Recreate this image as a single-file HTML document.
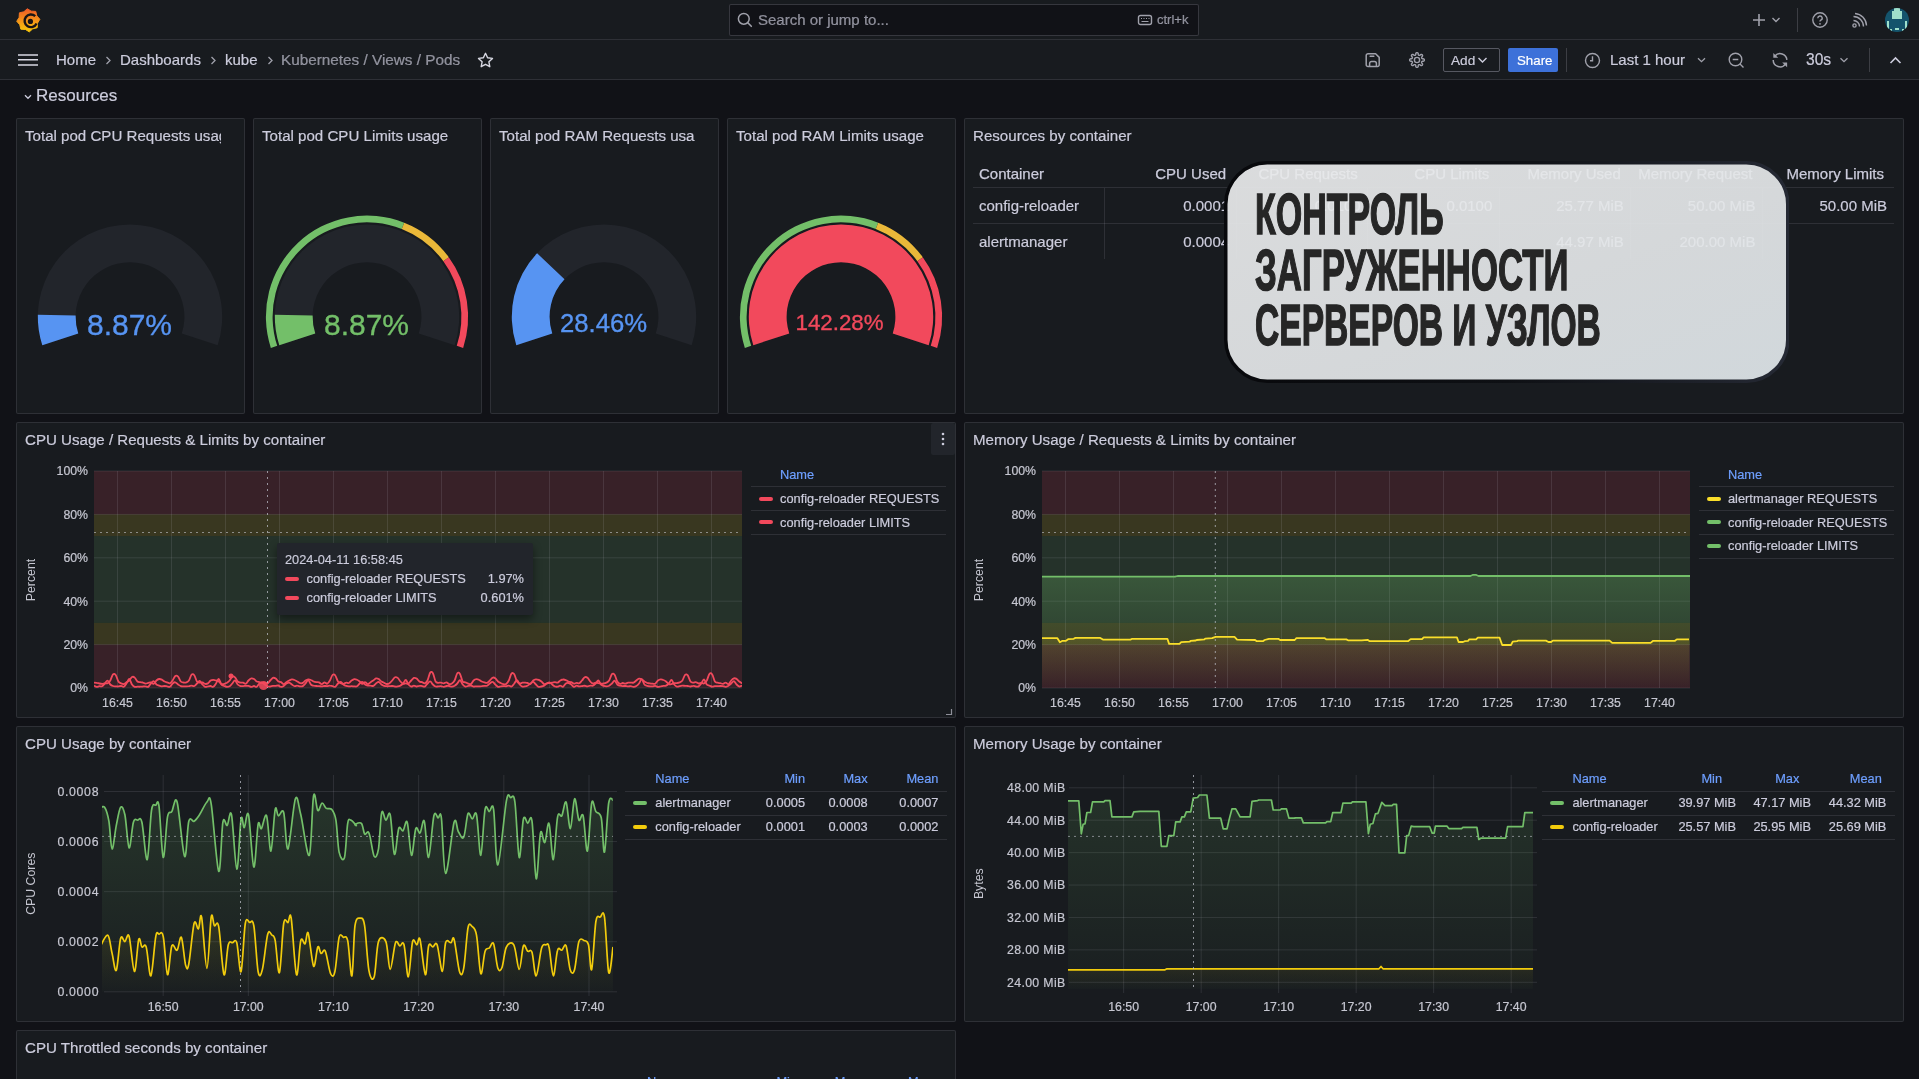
<!DOCTYPE html>
<html><head><meta charset="utf-8">
<style>
*{box-sizing:border-box;margin:0;padding:0}
html,body{width:1919px;height:1079px;overflow:hidden;background:#111217;will-change:transform;font-family:"Liberation Sans",sans-serif;color:#ccccdc}
.abs{position:absolute}
#top{position:absolute;left:0;top:0;width:1919px;height:40px;background:#181b1f;border-bottom:1px solid rgba(204,204,220,0.12)}
#nav{position:absolute;left:0;top:40px;width:1919px;height:40px;background:#181b1f;border-bottom:1px solid rgba(204,204,220,0.12)}
.panel{position:absolute;background:#181b1f;border:1px solid rgba(204,204,220,0.12);border-radius:2px;overflow:hidden}
.ptitle{position:absolute;left:8px;top:8px;font-size:15.1px;line-height:18px;-webkit-text-stroke-width:0.2px;color:#ccccdc;white-space:nowrap}
.t{position:absolute;white-space:nowrap;-webkit-text-stroke-width:0.2px}
</style></head><body>
<div id="top">
<svg class="abs" style="left:12px;top:4px" width="32" height="32" viewBox="0 0 32 32">
<defs><linearGradient id="lg" x1="0" y1="0" x2="0" y2="1"><stop offset="0" stop-color="#f05a28"/><stop offset="1" stop-color="#fbca0a"/></linearGradient></defs>
<path fill="url(#lg)" stroke="url(#lg)" stroke-width="1" stroke-linejoin="round" d="M15.29 4.74 L19.19 7.14 L23.76 7.41 L24.82 11.87 L27.86 15.29 L25.46 19.19 L25.19 23.76 L20.73 24.82 L17.31 27.86 L13.41 25.46 L8.84 25.19 L7.78 20.73 L4.74 17.31 L7.14 13.41 L7.41 8.84 L11.87 7.78Z"/>
<path fill="none" stroke="#1a1416" stroke-width="2.4" d="M23.2 12.2 A6.3 6.3 0 1 0 24.6 19.5"/>
<circle cx="18.4" cy="17.4" r="2.6" fill="#1a1416"/>
</svg>
<div class="abs" style="left:729px;top:4px;width:470px;height:32px;background:#111217;border:1px solid rgba(204,204,220,0.2);border-radius:2px"></div>
<svg class="abs" style="left:737px;top:12px" width="16" height="16" viewBox="0 0 16 16"><circle cx="6.8" cy="6.8" r="5.4" fill="none" stroke="#a0a1ab" stroke-width="1.5"/><path d="M10.8 10.8 L14.3 14.3" stroke="#a0a1ab" stroke-width="1.6" stroke-linecap="round"/></svg>
<div class="t" style="left:758px;top:11px;font-size:15px;line-height:18px;color:rgba(204,204,220,0.65)">Search or jump to...</div>
<svg class="abs" style="left:1137px;top:14px" width="16" height="12" viewBox="0 0 16 12"><rect x="1.5" y="1.5" width="13" height="9" rx="2" fill="none" stroke="#a0a1ab" stroke-width="1.4"/><path d="M4 4.5h1M6.5 4.5h1M9 4.5h1M11.5 4.5h1M4.5 7.5h7" stroke="#a0a1ab" stroke-width="1.2"/></svg>
<div class="t" style="left:1157px;top:12px;font-size:13px;line-height:15px;color:rgba(204,204,220,0.65)">ctrl+k</div>
<svg class="abs" style="left:1751px;top:12px" width="16" height="16" viewBox="0 0 16 16"><path d="M8 2v12M2 8h12" stroke="#a0a1ab" stroke-width="1.6"/></svg>
<svg class="abs" style="left:1771px;top:16px" width="10" height="8" viewBox="0 0 10 8"><path d="M1.5 2l3.5 3.5L8.5 2" fill="none" stroke="#a0a1ab" stroke-width="1.4"/></svg>
<div class="abs" style="left:1797px;top:8px;width:1px;height:24px;background:rgba(204,204,220,0.2)"></div>
<svg class="abs" style="left:1811px;top:11px" width="18" height="18" viewBox="0 0 18 18"><circle cx="9" cy="9" r="7.2" fill="none" stroke="#a0a1ab" stroke-width="1.4"/><path d="M6.8 7.2a2.2 2.2 0 1 1 3 2c-.6.3-.8.6-.8 1.3" fill="none" stroke="#a0a1ab" stroke-width="1.4"/><circle cx="9" cy="12.8" r="0.9" fill="#a0a1ab"/></svg>
<svg class="abs" style="left:1851px;top:12px" width="17" height="17" viewBox="0 0 17 17"><circle cx="3.5" cy="13.5" r="1.6" fill="none" stroke="#a0a1ab" stroke-width="1.4"/><path d="M2.5 8.5a6 6 0 0 1 6 6M2.5 4.5a10 10 0 0 1 10 10M4 1.5a12.5 12.5 0 0 1 11.5 12" fill="none" stroke="#a0a1ab" stroke-width="1.4"/></svg>
<svg class="abs" style="left:1885px;top:8px" width="24" height="24" viewBox="0 0 24 24"><defs><clipPath id="av"><circle cx="12" cy="12" r="12"/></clipPath></defs><g clip-path="url(#av)"><rect width="24" height="24" fill="#14546c"/><rect x="9" y="0" width="6" height="3" fill="#9fe0cb"/><rect x="7" y="3" width="10" height="8" fill="#9fe0cb"/><rect x="2" y="13" width="2" height="9" fill="#9fe0cb"/><rect x="20" y="13" width="2" height="9" fill="#9fe0cb"/><rect x="10" y="20" width="4" height="2" fill="#9fe0cb"/><rect x="5" y="21" width="2" height="3" fill="#9fe0cb"/><rect x="17" y="21" width="2" height="3" fill="#9fe0cb"/></g></svg>
</div>
<div id="nav">
<svg class="abs" style="left:17px;top:13px" width="22" height="14" viewBox="0 0 22 14"><path d="M1 2h20M1 6.8h20M1 12h20" stroke="#d8d9e3" stroke-width="1.6"/></svg>
<div class="t" style="left:56px;top:11px;font-size:15px;line-height:18px;color:#ccccdc">Home</div>
<svg class="abs" style="left:104px;top:16px" width="8" height="9" viewBox="0 0 8 9"><path d="M2.5 1l3.5 3.5L2.5 8" fill="none" stroke="#a0a1ab" stroke-width="1.3"/></svg>
<div class="t" style="left:120px;top:11px;font-size:15px;line-height:18px;color:#ccccdc">Dashboards</div>
<svg class="abs" style="left:209px;top:16px" width="8" height="9" viewBox="0 0 8 9"><path d="M2.5 1l3.5 3.5L2.5 8" fill="none" stroke="#a0a1ab" stroke-width="1.3"/></svg>
<div class="t" style="left:225px;top:11px;font-size:15px;line-height:18px;color:#ccccdc">kube</div>
<svg class="abs" style="left:266px;top:16px" width="8" height="9" viewBox="0 0 8 9"><path d="M2.5 1l3.5 3.5L2.5 8" fill="none" stroke="#a0a1ab" stroke-width="1.3"/></svg>
<div class="t" style="left:281px;top:11px;font-size:15.3px;line-height:18px;color:rgba(204,204,220,0.65)">Kubernetes / Views / Pods</div>
<svg class="abs" style="left:477px;top:12px" width="17" height="16" viewBox="0 0 17 16"><path d="M8.5 1.3l2.1 4.5 4.9.6-3.6 3.4.9 4.9-4.3-2.4-4.3 2.4.9-4.9L1.5 6.4l4.9-.6z" fill="none" stroke="#d8d9e3" stroke-width="1.4" stroke-linejoin="round"/></svg>

<svg class="abs" style="left:1365px;top:12px" width="16" height="16" viewBox="0 0 16 16"><path d="M3 1.8h7.6l3.6 3.6v7.4a1.8 1.8 0 0 1-1.8 1.8H3a1.8 1.8 0 0 1-1.8-1.8V3.6A1.8 1.8 0 0 1 3 1.8z" fill="none" stroke="#a0a1ab" stroke-width="1.5" stroke-linejoin="round"/><path d="M5.2 4.2h3.6" stroke="#a0a1ab" stroke-width="1.6" stroke-linecap="round"/><path d="M4.6 14.4v-2.9a2 2 0 0 1 2-2h2.8a2 2 0 0 1 2 2v2.9" fill="none" stroke="#a0a1ab" stroke-width="1.5"/></svg>
<svg class="abs" style="left:1408px;top:11px" width="18" height="18" viewBox="0 0 18 18"><path d="M16.35 9.00 L16.33 9.23 L16.27 9.46 L16.17 9.68 L16.01 9.89 L15.79 10.08 L15.42 10.22 L14.52 10.23 L14.25 10.35 L14.05 10.47 L13.90 10.59 L13.79 10.72 L13.70 10.86 L13.64 11.01 L13.60 11.17 L13.59 11.34 L13.61 11.53 L13.66 11.76 L13.78 12.03 L14.40 12.67 L14.56 13.04 L14.59 13.33 L14.55 13.59 L14.46 13.82 L14.35 14.02 L14.20 14.20 L14.02 14.35 L13.82 14.46 L13.59 14.55 L13.33 14.59 L13.04 14.56 L12.67 14.40 L12.03 13.78 L11.76 13.66 L11.53 13.61 L11.34 13.59 L11.17 13.60 L11.01 13.64 L10.86 13.70 L10.72 13.79 L10.59 13.90 L10.47 14.05 L10.35 14.25 L10.23 14.52 L10.22 15.42 L10.08 15.79 L9.89 16.01 L9.68 16.17 L9.46 16.27 L9.23 16.33 L9.00 16.35 L8.77 16.33 L8.54 16.27 L8.32 16.17 L8.11 16.01 L7.92 15.79 L7.78 15.42 L7.77 14.52 L7.65 14.25 L7.53 14.05 L7.41 13.90 L7.28 13.79 L7.14 13.70 L6.99 13.64 L6.83 13.60 L6.66 13.59 L6.47 13.61 L6.24 13.66 L5.97 13.78 L5.33 14.40 L4.96 14.56 L4.67 14.59 L4.41 14.55 L4.18 14.46 L3.98 14.35 L3.80 14.20 L3.65 14.02 L3.54 13.82 L3.45 13.59 L3.41 13.33 L3.44 13.04 L3.60 12.67 L4.22 12.03 L4.34 11.76 L4.39 11.53 L4.41 11.34 L4.40 11.17 L4.36 11.01 L4.30 10.86 L4.21 10.72 L4.10 10.59 L3.95 10.47 L3.75 10.35 L3.48 10.23 L2.58 10.22 L2.21 10.08 L1.99 9.89 L1.83 9.68 L1.73 9.46 L1.67 9.23 L1.65 9.00 L1.67 8.77 L1.73 8.54 L1.83 8.32 L1.99 8.11 L2.21 7.92 L2.58 7.78 L3.48 7.77 L3.75 7.65 L3.95 7.53 L4.10 7.41 L4.21 7.28 L4.30 7.14 L4.36 6.99 L4.40 6.83 L4.41 6.66 L4.39 6.47 L4.34 6.24 L4.22 5.97 L3.60 5.33 L3.44 4.96 L3.41 4.67 L3.45 4.41 L3.54 4.18 L3.65 3.98 L3.80 3.80 L3.98 3.65 L4.18 3.54 L4.41 3.45 L4.67 3.41 L4.96 3.44 L5.33 3.60 L5.97 4.22 L6.24 4.34 L6.47 4.39 L6.66 4.41 L6.83 4.40 L6.99 4.36 L7.14 4.30 L7.28 4.21 L7.41 4.10 L7.53 3.95 L7.65 3.75 L7.77 3.48 L7.78 2.58 L7.92 2.21 L8.11 1.99 L8.32 1.83 L8.54 1.73 L8.77 1.67 L9.00 1.65 L9.23 1.67 L9.46 1.73 L9.68 1.83 L9.89 1.99 L10.08 2.21 L10.22 2.58 L10.23 3.48 L10.35 3.75 L10.47 3.95 L10.59 4.10 L10.72 4.21 L10.86 4.30 L11.01 4.36 L11.17 4.40 L11.34 4.41 L11.53 4.39 L11.76 4.34 L12.03 4.22 L12.67 3.60 L13.04 3.44 L13.33 3.41 L13.59 3.45 L13.82 3.54 L14.02 3.65 L14.20 3.80 L14.35 3.98 L14.46 4.18 L14.55 4.41 L14.59 4.67 L14.56 4.96 L14.40 5.33 L13.78 5.97 L13.66 6.24 L13.61 6.47 L13.59 6.66 L13.60 6.83 L13.64 6.99 L13.70 7.14 L13.79 7.28 L13.90 7.41 L14.05 7.53 L14.25 7.65 L14.52 7.77 L15.42 7.78 L15.79 7.92 L16.01 8.11 L16.17 8.32 L16.27 8.54 L16.33 8.77Z" fill="none" stroke="#a0a1ab" stroke-width="1.4" stroke-linejoin="round"/><circle cx="9" cy="9" r="2.6" fill="none" stroke="#a0a1ab" stroke-width="1.4"/></svg>
<div class="abs" style="left:1443px;top:8px;width:57px;height:24px;border:1px solid rgba(204,204,220,0.35);border-radius:2px"></div>
<div class="t" style="left:1451px;top:12px;font-size:13.6px;line-height:17px;color:#ccccdc">Add</div>
<svg class="abs" style="left:1477px;top:16px" width="11" height="8" viewBox="0 0 11 8"><path d="M1.5 2l4 4 4-4" fill="none" stroke="#ccccdc" stroke-width="1.4"/></svg>
<div class="abs" style="left:1508px;top:8px;width:50px;height:24px;background:#3d71d9;border-radius:2px"></div>
<div class="t" style="left:1517px;top:12px;font-size:13.3px;line-height:17px;color:#ffffff">Share</div>
<div class="abs" style="left:1566px;top:8px;width:1px;height:24px;background:rgba(204,204,220,0.2)"></div>
<svg class="abs" style="left:1584px;top:12px" width="17" height="17" viewBox="0 0 17 17"><circle cx="8.5" cy="8.5" r="7" fill="none" stroke="#a0a1ab" stroke-width="1.4"/><path d="M8.5 4.3v4.5H6" fill="none" stroke="#a0a1ab" stroke-width="1.4"/></svg>
<div class="t" style="left:1610px;top:11px;font-size:15px;line-height:18px;color:#ccccdc">Last 1 hour</div>
<svg class="abs" style="left:1696px;top:16px" width="11" height="8" viewBox="0 0 11 8"><path d="M2 2.2l3.5 3.5 3.5-3.5" fill="none" stroke="#a0a1ab" stroke-width="1.3"/></svg>
<svg class="abs" style="left:1728px;top:12px" width="18" height="17" viewBox="0 0 18 17"><circle cx="7.5" cy="7.5" r="6.3" fill="none" stroke="#a0a1ab" stroke-width="1.4"/><path d="M4.7 7.5h5.6M12 12l3.5 3.5" fill="none" stroke="#a0a1ab" stroke-width="1.4"/></svg>
<svg class="abs" style="left:1771px;top:12px" width="18" height="17" viewBox="0 0 18 17"><path d="M3.9 4.1A6.8 6.8 0 0 1 15.9 7.9M2.2 8.1A6.8 6.8 0 0 0 14.6 11.9" fill="none" stroke="#a0a1ab" stroke-width="1.5"/><path d="M2.3 0.9V5.8H7.2Z" fill="#a0a1ab"/><path d="M16.1 15.3V10.4H11.2Z" fill="#a0a1ab"/></svg>
<div class="t" style="left:1806px;top:11px;font-size:15.6px;line-height:18px;color:#ccccdc">30s</div>
<svg class="abs" style="left:1839px;top:16px" width="11" height="8" viewBox="0 0 11 8"><path d="M1.5 2.2l3.5 3.5 3.5-3.5" fill="none" stroke="#a0a1ab" stroke-width="1.3"/></svg>
<div class="abs" style="left:1869px;top:8px;width:1px;height:24px;background:rgba(204,204,220,0.2)"></div>
<svg class="abs" style="left:1889px;top:16px" width="13" height="9" viewBox="0 0 13 9"><path d="M1.5 7l5-5 5 5" fill="none" stroke="#ccccdc" stroke-width="1.6"/></svg>
</div>
<svg class="abs" style="left:24px;top:94px" width="8" height="6" viewBox="0 0 8 6"><path d="M1 1.3l3 3 3-3" fill="none" stroke="#ccccdc" stroke-width="1.3"/></svg>
<div class="t" style="left:36px;top:86px;font-size:17px;line-height:20px;color:#ccccdc">Resources</div>


<div class="panel" style="left:16px;top:118px;width:229px;height:296px"><div class="ptitle" style="width:196px;overflow:hidden">Total pod CPU Requests usage</div><svg class="abs" style="left:-1px;top:-1px" width="229" height="296"><path d="M26.31 227.19A92.2 92.2 0 1 1 201.69 227.19L165.74 215.51A54.4 54.4 0 1 0 62.26 215.51Z" fill="#22252b"/><path d="M26.31 227.19A92.2 92.2 0 0 1 21.82 196.83L59.61 197.60A54.4 54.4 0 0 0 62.26 215.51Z" fill="#5794f2"/></svg><div class="t" style="left:-1px;width:227px;top:191px;text-align:center;font-size:30px;line-height:30px;color:#5794f2;-webkit-text-stroke:0.35px #5794f2">8.87%</div></div>
<div class="panel" style="left:253px;top:118px;width:229px;height:296px"><div class="ptitle" style="width:196px;overflow:hidden">Total pod CPU Limits usage</div><svg class="abs" style="left:-1px;top:-1px" width="229" height="296"><path d="M26.31 227.19A92.2 92.2 0 1 1 201.69 227.19L165.74 215.51A54.4 54.4 0 1 0 62.26 215.51Z" fill="#22252b"/><path d="M26.31 227.19A92.2 92.2 0 0 1 21.82 196.83L59.61 197.60A54.4 54.4 0 0 0 62.26 215.51Z" fill="#73bf69"/><path d="M17.85 229.94A101.1 101.1 0 0 1 151.22 104.70L148.75 110.93A94.4 94.4 0 0 0 24.22 227.87Z" fill="#73bf69"/><path d="M151.22 104.70A101.1 101.1 0 0 1 195.79 139.27L190.37 143.21A94.4 94.4 0 0 0 148.75 110.93Z" fill="#eab839"/><path d="M195.79 139.27A101.1 101.1 0 0 1 210.15 229.94L203.78 227.87A94.4 94.4 0 0 0 190.37 143.21Z" fill="#f2495c"/></svg><div class="t" style="left:-1px;width:227px;top:191px;text-align:center;font-size:30px;line-height:30px;color:#73bf69;-webkit-text-stroke:0.35px #73bf69">8.87%</div></div>
<div class="panel" style="left:490px;top:118px;width:229px;height:296px"><div class="ptitle" style="width:196px;overflow:hidden">Total pod RAM Requests usage</div><svg class="abs" style="left:-1px;top:-1px" width="229" height="296"><path d="M26.31 227.19A92.2 92.2 0 1 1 201.69 227.19L165.74 215.51A54.4 54.4 0 1 0 62.26 215.51Z" fill="#22252b"/><path d="M26.31 227.19A92.2 92.2 0 0 1 47.09 135.26L74.52 161.27A54.4 54.4 0 0 0 62.26 215.51Z" fill="#5794f2"/></svg><div class="t" style="left:-1px;width:227px;top:192px;text-align:center;font-size:25.7px;line-height:25.7px;color:#5794f2;-webkit-text-stroke:0.35px #5794f2">28.46%</div></div>
<div class="panel" style="left:727px;top:118px;width:229px;height:296px"><div class="ptitle" style="width:196px;overflow:hidden">Total pod RAM Limits usage</div><svg class="abs" style="left:-1px;top:-1px" width="229" height="296"><path d="M26.31 227.19A92.2 92.2 0 1 1 201.69 227.19L165.74 215.51A54.4 54.4 0 1 0 62.26 215.51Z" fill="#22252b"/><path d="M26.31 227.19A92.2 92.2 0 1 1 201.69 227.19L165.74 215.51A54.4 54.4 0 1 0 62.26 215.51Z" fill="#f2495c"/><path d="M17.85 229.94A101.1 101.1 0 0 1 151.22 104.70L148.75 110.93A94.4 94.4 0 0 0 24.22 227.87Z" fill="#73bf69"/><path d="M151.22 104.70A101.1 101.1 0 0 1 195.79 139.27L190.37 143.21A94.4 94.4 0 0 0 148.75 110.93Z" fill="#eab839"/><path d="M195.79 139.27A101.1 101.1 0 0 1 210.15 229.94L203.78 227.87A94.4 94.4 0 0 0 190.37 143.21Z" fill="#f2495c"/></svg><div class="t" style="left:-2px;width:227px;top:193px;text-align:center;font-size:22.3px;line-height:22.3px;color:#f2495c;-webkit-text-stroke:0.35px #f2495c">142.28%</div></div>
<div class="panel" style="left:964px;top:118px;width:940px;height:296px"><div class="ptitle">Resources by container</div><div class="t" style="left:14.0px;top:46.1px;font-size:15px;line-height:17px;-webkit-text-stroke:0.25px #ccccdc;">Container</div><div class="t" style="right:676.9px;top:46.1px;font-size:15px;line-height:17px;text-align:right;-webkit-text-stroke:0.25px #ccccdc;">CPU Used</div><div class="t" style="right:545.3px;top:46.1px;font-size:15px;line-height:17px;text-align:right;-webkit-text-stroke:0.25px #ccccdc;">CPU Requests</div><div class="t" style="right:413.7px;top:46.1px;font-size:15px;line-height:17px;text-align:right;-webkit-text-stroke:0.25px #ccccdc;">CPU Limits</div><div class="t" style="right:282.2px;top:46.1px;font-size:15px;line-height:17px;text-align:right;-webkit-text-stroke:0.25px #ccccdc;">Memory Used</div><div class="t" style="right:150.6px;top:46.1px;font-size:15px;line-height:17px;text-align:right;-webkit-text-stroke:0.25px #ccccdc;">Memory Request</div><div class="t" style="right:19.0px;top:46.1px;font-size:15px;line-height:17px;text-align:right;-webkit-text-stroke:0.25px #ccccdc;">Memory Limits</div><div class="t" style="left:14.0px;top:77.7px;font-size:15px;line-height:17px;">config-reloader</div><div class="t" style="right:673.9px;top:77.7px;font-size:15px;line-height:17px;text-align:right;">0.0001</div><div class="t" style="right:542.3px;top:77.7px;font-size:15px;line-height:17px;text-align:right;">0.0100</div><div class="t" style="right:410.7px;top:77.7px;font-size:15px;line-height:17px;text-align:right;">0.0100</div><div class="t" style="right:279.2px;top:77.7px;font-size:15px;line-height:17px;text-align:right;">25.77 MiB</div><div class="t" style="right:147.6px;top:77.7px;font-size:15px;line-height:17px;text-align:right;">50.00 MiB</div><div class="t" style="right:16.0px;top:77.7px;font-size:15px;line-height:17px;text-align:right;">50.00 MiB</div><div class="t" style="left:14.0px;top:113.7px;font-size:15px;line-height:17px;">alertmanager</div><div class="t" style="right:673.9px;top:113.7px;font-size:15px;line-height:17px;text-align:right;">0.0004</div><div class="t" style="right:279.2px;top:113.7px;font-size:15px;line-height:17px;text-align:right;">44.97 MiB</div><div class="t" style="right:147.6px;top:113.7px;font-size:15px;line-height:17px;text-align:right;">200.00 MiB</div><div class="abs" style="left:8px;top:68px;width:921px;height:1px;background:rgba(204,204,220,0.12)"></div><div class="abs" style="left:8px;top:104px;width:921px;height:1px;background:rgba(204,204,220,0.12)"></div><div class="abs" style="left:139px;top:69px;width:1px;height:71px;background:rgba(204,204,220,0.12)"></div><div class="abs" style="left:271px;top:69px;width:1px;height:71px;background:rgba(204,204,220,0.12)"></div><div class="abs" style="left:402px;top:69px;width:1px;height:71px;background:rgba(204,204,220,0.12)"></div><div class="abs" style="left:534px;top:69px;width:1px;height:71px;background:rgba(204,204,220,0.12)"></div><div class="abs" style="left:665px;top:69px;width:1px;height:71px;background:rgba(204,204,220,0.12)"></div><div class="abs" style="left:797px;top:69px;width:1px;height:71px;background:rgba(204,204,220,0.12)"></div><svg class="abs" style="left:258.5px;top:42px" width="565.5" height="222"><defs>
<linearGradient id="ob" x1="0" y1="0" x2="1" y2="0"><stop offset="0" stop-color="#08090c"/><stop offset="0.5" stop-color="#0e1014"/><stop offset="1" stop-color="#252934"/></linearGradient>
<linearGradient id="of" x1="0" y1="0" x2="1" y2="1"><stop offset="0" stop-color="#e9eaeb"/><stop offset="0.6" stop-color="#e3e6e8"/><stop offset="1" stop-color="#dfe6ea"/></linearGradient></defs>
<rect x="1.75" y="1.75" width="562.0" height="218.5" rx="41.5" fill="url(#of)" fill-opacity="0.93" stroke="url(#ob)" stroke-width="3.5"/></svg><div class="t" style="left:289.5999999999999px;top:66.5px;font-weight:bold;font-size:57.8px;line-height:57.8px;color:#262626;-webkit-text-stroke:1.5px #262626;transform-origin:0 0;transform:scaleX(0.583);transform:scaleX(0.588)">КОНТРОЛЬ</div><div class="t" style="left:289.5999999999999px;top:122.5px;font-weight:bold;font-size:57.8px;line-height:57.8px;color:#262626;-webkit-text-stroke:1.5px #262626;transform-origin:0 0;transform:scaleX(0.583);transform:scaleX(0.602)">ЗАГРУЖЕННОСТИ</div><div class="t" style="left:289.5999999999999px;top:178px;font-weight:bold;font-size:57.8px;line-height:57.8px;color:#262626;-webkit-text-stroke:1.5px #262626;transform-origin:0 0;transform:scaleX(0.583);transform:scaleX(0.581)">СЕРВЕРОВ И УЗЛОВ</div></div>
<div class="panel" style="left:16px;top:422px;width:940px;height:296px"><div class="ptitle">CPU Usage / Requests &amp; Limits by container</div><svg class="abs" style="left:-1px;top:-1px" width="940" height="296" font-family="Liberation Sans, sans-serif"><g transform="translate(-16,-422)"><defs><clipPath id="c16_422"><rect x="94" y="467" width="648" height="221"/></clipPath></defs><rect x="94" y="471.0" width="648" height="43.39999999999998" fill="rgba(242,73,92,0.15)"/><rect x="94" y="514.4" width="648" height="21.700000000000045" fill="rgba(250,222,42,0.15)"/><rect x="94" y="536.1" width="648" height="86.79999999999995" fill="rgba(115,191,105,0.15)"/><rect x="94" y="622.9" width="648" height="21.700000000000045" fill="rgba(250,222,42,0.15)"/><rect x="94" y="644.6" width="648" height="43.39999999999998" fill="rgba(242,73,92,0.15)"/><rect x="117.0" y="471" width="1" height="217" fill="rgba(204,204,220,0.12)"/><rect x="171.0" y="471" width="1" height="217" fill="rgba(204,204,220,0.12)"/><rect x="225.0" y="471" width="1" height="217" fill="rgba(204,204,220,0.12)"/><rect x="279.0" y="471" width="1" height="217" fill="rgba(204,204,220,0.12)"/><rect x="333.0" y="471" width="1" height="217" fill="rgba(204,204,220,0.12)"/><rect x="387.0" y="471" width="1" height="217" fill="rgba(204,204,220,0.12)"/><rect x="441.0" y="471" width="1" height="217" fill="rgba(204,204,220,0.12)"/><rect x="495.0" y="471" width="1" height="217" fill="rgba(204,204,220,0.12)"/><rect x="549.0" y="471" width="1" height="217" fill="rgba(204,204,220,0.12)"/><rect x="603.0" y="471" width="1" height="217" fill="rgba(204,204,220,0.12)"/><rect x="657.0" y="471" width="1" height="217" fill="rgba(204,204,220,0.12)"/><rect x="711.0" y="471" width="1" height="217" fill="rgba(204,204,220,0.12)"/><rect x="94" y="470.5" width="648" height="1" fill="rgba(204,204,220,0.12)"/><rect x="94" y="513.9" width="648" height="1" fill="rgba(204,204,220,0.12)"/><rect x="94" y="557.3" width="648" height="1" fill="rgba(204,204,220,0.12)"/><rect x="94" y="600.7" width="648" height="1" fill="rgba(204,204,220,0.12)"/><rect x="94" y="644.1" width="648" height="1" fill="rgba(204,204,220,0.12)"/><rect x="94" y="687.5" width="648" height="1" fill="rgba(204,204,220,0.12)"/><g clip-path="url(#c16_422)"><path d="M94.0 682.6 C94.5 682.6 95.8 682.6 96.7 682.8 C97.6 682.9 98.5 683.3 99.4 683.5 C100.3 683.7 101.2 683.9 102.1 683.9 C103.0 683.8 103.9 683.5 104.8 683.4 C105.7 683.3 106.7 683.7 107.6 683.2 C108.5 682.7 109.4 682.0 110.3 680.5 C111.2 679.0 112.1 675.3 113.0 674.4 C113.9 673.5 114.8 673.9 115.7 675.0 C116.6 676.2 117.5 680.1 118.4 681.5 C119.3 682.9 120.2 683.0 121.1 683.4 C122.0 683.8 122.9 684.2 123.8 684.0 C124.7 683.8 125.6 682.8 126.5 682.2 C127.4 681.7 128.3 681.4 129.2 680.5 C130.2 679.6 131.1 677.5 132.0 677.0 C132.9 676.5 133.8 676.8 134.7 677.6 C135.6 678.3 136.5 680.7 137.4 681.5 C138.3 682.3 139.2 682.0 140.1 682.2 C141.0 682.4 141.9 682.3 142.8 682.5 C143.7 682.8 144.6 683.6 145.5 683.6 C146.4 683.7 147.3 683.1 148.2 682.9 C149.1 682.7 150.0 682.2 150.9 682.4 C151.8 682.6 152.7 684.2 153.6 683.9 C154.6 683.6 155.5 681.3 156.4 680.5 C157.3 679.7 158.2 679.2 159.1 679.0 C160.0 678.9 160.9 679.2 161.8 679.6 C162.7 680.1 163.6 681.1 164.5 681.5 C165.4 681.9 166.3 682.0 167.2 682.3 C168.1 682.6 169.0 683.7 169.9 683.4 C170.8 683.1 171.7 681.7 172.6 680.5 C173.5 679.3 174.4 676.7 175.3 676.0 C176.2 675.4 177.1 675.7 178.1 676.6 C179.0 677.5 179.9 680.5 180.8 681.5 C181.7 682.5 182.6 682.3 183.5 682.5 C184.4 682.6 185.3 682.8 186.2 682.5 C187.1 682.1 188.0 681.8 188.9 680.5 C189.8 679.2 190.7 675.6 191.6 674.7 C192.5 673.8 193.4 674.1 194.3 675.3 C195.2 676.4 196.1 680.3 197.0 681.5 C197.9 682.7 198.8 682.5 199.7 682.7 C200.6 682.8 201.5 682.2 202.5 682.4 C203.4 682.6 204.3 683.8 205.2 683.9 C206.1 684.1 207.0 683.9 207.9 683.4 C208.8 682.8 209.7 681.1 210.6 680.5 C211.5 679.9 212.4 679.9 213.3 679.9 C214.2 679.9 215.1 680.2 216.0 680.5 C216.9 680.7 217.8 680.9 218.7 681.5 C219.6 682.1 220.5 683.7 221.4 684.1 C222.3 684.5 223.2 684.2 224.1 684.0 C225.0 683.7 225.9 683.2 226.9 682.7 C227.8 682.1 228.7 681.5 229.6 680.5 C230.5 679.5 231.4 677.2 232.3 676.7 C233.2 676.1 234.1 676.5 235.0 677.3 C235.9 678.1 236.8 680.6 237.7 681.5 C238.6 682.4 239.5 682.4 240.4 682.6 C241.3 682.8 242.2 682.5 243.1 682.7 C244.0 682.9 244.9 684.2 245.8 683.8 C246.7 683.4 247.6 681.4 248.5 680.5 C249.4 679.6 250.4 678.6 251.3 678.4 C252.2 678.1 253.1 678.5 254.0 679.0 C254.9 679.5 255.8 681.0 256.7 681.5 C257.6 682.0 258.5 681.9 259.4 682.1 C260.3 682.4 261.2 682.7 262.1 682.8 C263.0 682.9 263.9 682.5 264.8 682.7 C265.7 682.8 266.6 683.9 267.5 683.5 C268.4 683.2 269.3 681.4 270.2 680.5 C271.1 679.6 272.0 678.2 272.9 677.9 C273.8 677.6 274.8 677.9 275.7 678.5 C276.6 679.1 277.5 680.9 278.4 681.5 C279.3 682.1 280.2 681.7 281.1 682.1 C282.0 682.6 282.9 684.2 283.8 684.1 C284.7 684.1 285.6 682.7 286.5 682.1 C287.4 681.4 288.3 680.9 289.2 680.5 C290.1 680.1 291.0 679.5 291.9 679.4 C292.8 679.3 293.7 679.6 294.6 680.0 C295.5 680.3 296.4 681.0 297.3 681.5 C298.3 682.0 299.2 683.0 300.1 683.2 C301.0 683.4 301.9 683.4 302.8 682.9 C303.7 682.5 304.6 681.1 305.5 680.5 C306.4 679.9 307.3 679.5 308.2 679.4 C309.1 679.3 310.0 679.6 310.9 680.0 C311.8 680.3 312.7 681.1 313.6 681.5 C314.5 681.9 315.4 682.0 316.3 682.1 C317.2 682.3 318.1 682.1 319.0 682.4 C319.9 682.7 320.8 684.1 321.7 684.1 C322.7 684.1 323.6 682.5 324.5 682.4 C325.4 682.4 326.3 684.0 327.2 683.7 C328.1 683.3 329.0 682.0 329.9 680.5 C330.8 679.0 331.7 675.7 332.6 674.9 C333.5 674.0 334.4 674.3 335.3 675.5 C336.2 676.6 337.1 680.2 338.0 681.5 C338.9 682.8 339.8 682.7 340.7 683.1 C341.6 683.5 342.5 684.1 343.4 684.0 C344.3 683.9 345.2 682.7 346.2 682.6 C347.1 682.4 348.0 683.4 348.9 683.0 C349.8 682.7 350.7 681.1 351.6 680.5 C352.5 679.9 353.4 679.3 354.3 679.1 C355.2 679.0 356.1 679.3 357.0 679.7 C357.9 680.1 358.8 680.8 359.7 681.5 C360.6 682.2 361.5 683.8 362.4 683.9 C363.3 684.0 364.2 682.0 365.1 682.1 C366.0 682.1 366.9 684.1 367.8 684.1 C368.7 684.1 369.6 682.8 370.6 682.2 C371.5 681.6 372.4 681.1 373.3 680.5 C374.2 679.9 375.1 678.7 376.0 678.4 C376.9 678.2 377.8 678.5 378.7 679.0 C379.6 679.6 380.5 680.9 381.4 681.5 C382.3 682.1 383.2 682.3 384.1 682.7 C385.0 683.2 385.9 684.0 386.8 684.0 C387.7 684.1 388.6 683.8 389.5 683.2 C390.4 682.6 391.3 681.5 392.2 680.5 C393.1 679.5 394.1 677.7 395.0 677.3 C395.9 676.8 396.8 677.2 397.7 677.9 C398.6 678.6 399.5 680.5 400.4 681.5 C401.3 682.5 402.2 683.4 403.1 683.8 C404.0 684.1 404.9 683.4 405.8 683.4 C406.7 683.4 407.6 684.1 408.5 683.6 C409.4 683.1 410.3 681.4 411.2 680.5 C412.1 679.6 413.0 678.3 413.9 677.9 C414.8 677.6 415.7 677.9 416.6 678.5 C417.5 679.1 418.5 680.9 419.4 681.5 C420.3 682.1 421.2 681.9 422.1 682.2 C423.0 682.5 423.9 683.6 424.8 683.3 C425.7 683.0 426.6 682.3 427.5 680.5 C428.4 678.7 429.3 673.8 430.2 672.6 C431.1 671.4 432.0 671.7 432.9 673.2 C433.8 674.7 434.7 679.9 435.6 681.5 C436.5 683.1 437.4 682.6 438.3 682.8 C439.2 682.9 440.1 682.4 441.0 682.6 C441.9 682.7 442.9 683.5 443.8 683.4 C444.7 683.4 445.6 682.2 446.5 682.3 C447.4 682.4 448.3 684.0 449.2 684.2 C450.1 684.3 451.0 684.0 451.9 683.4 C452.8 682.8 453.7 682.2 454.6 680.5 C455.5 678.8 456.4 674.4 457.3 673.3 C458.2 672.2 459.1 672.6 460.0 673.9 C460.9 675.3 461.8 680.1 462.7 681.5 C463.6 682.9 464.5 681.9 465.4 682.3 C466.4 682.6 467.3 683.3 468.2 683.6 C469.1 683.9 470.0 684.6 470.9 684.1 C471.8 683.6 472.7 681.3 473.6 680.5 C474.5 679.7 475.4 679.3 476.3 679.2 C477.2 679.0 478.1 679.4 479.0 679.8 C479.9 680.1 480.8 681.1 481.7 681.5 C482.6 681.9 483.5 682.2 484.4 682.4 C485.3 682.6 486.2 683.1 487.1 682.8 C488.0 682.5 488.9 681.4 489.8 680.5 C490.8 679.6 491.7 678.1 492.6 677.7 C493.5 677.3 494.4 677.6 495.3 678.3 C496.2 678.9 497.1 680.7 498.0 681.5 C498.9 682.3 499.8 682.5 500.7 683.0 C501.6 683.4 502.5 684.1 503.4 684.2 C504.3 684.3 505.2 684.5 506.1 683.9 C507.0 683.3 507.9 682.2 508.8 680.5 C509.7 678.8 510.6 674.7 511.5 673.6 C512.4 672.6 513.3 672.9 514.3 674.2 C515.2 675.5 516.1 680.0 517.0 681.5 C517.9 683.0 518.8 683.3 519.7 683.5 C520.6 683.7 521.5 682.9 522.4 682.7 C523.3 682.5 524.2 682.5 525.1 682.6 C526.0 682.7 526.9 682.8 527.8 683.0 C528.7 683.3 529.6 684.4 530.5 684.0 C531.4 683.6 532.3 681.3 533.2 680.5 C534.1 679.7 535.0 679.4 535.9 679.3 C536.8 679.2 537.7 679.5 538.7 679.9 C539.6 680.3 540.5 680.8 541.4 681.5 C542.3 682.2 543.2 683.8 544.1 684.1 C545.0 684.4 545.9 683.5 546.8 683.4 C547.7 683.2 548.6 683.2 549.5 683.1 C550.4 683.0 551.3 682.9 552.2 682.7 C553.1 682.6 554.0 682.2 554.9 682.2 C555.8 682.2 556.7 682.9 557.6 682.6 C558.5 682.3 559.4 681.0 560.3 680.5 C561.2 680.0 562.2 679.5 563.1 679.5 C564.0 679.4 564.9 679.7 565.8 680.1 C566.7 680.4 567.6 681.2 568.5 681.5 C569.4 681.8 570.3 681.8 571.2 682.1 C572.1 682.5 573.0 683.6 573.9 683.7 C574.8 683.9 575.7 682.9 576.6 682.8 C577.5 682.7 578.4 683.7 579.3 683.3 C580.2 682.9 581.1 681.5 582.0 680.5 C582.9 679.5 583.8 677.7 584.7 677.2 C585.6 676.8 586.6 677.1 587.5 677.8 C588.4 678.5 589.3 680.5 590.2 681.5 C591.1 682.5 592.0 683.4 592.9 683.5 C593.8 683.7 594.7 682.7 595.6 682.6 C596.5 682.5 597.4 682.9 598.3 683.1 C599.2 683.2 600.1 683.6 601.0 683.7 C601.9 683.8 602.8 683.7 603.7 683.5 C604.6 683.3 605.5 683.1 606.4 682.6 C607.3 682.1 608.2 681.9 609.1 680.5 C610.1 679.1 611.0 675.1 611.9 674.1 C612.8 673.2 613.7 673.5 614.6 674.7 C615.5 676.0 616.4 680.0 617.3 681.5 C618.2 683.0 619.1 683.6 620.0 683.9 C620.9 684.1 621.8 683.1 622.7 683.0 C623.6 683.0 624.5 683.8 625.4 683.7 C626.3 683.6 627.2 682.9 628.1 682.7 C629.0 682.5 629.9 682.6 630.8 682.6 C631.7 682.6 632.6 683.0 633.5 682.6 C634.5 682.3 635.4 681.2 636.3 680.5 C637.2 679.8 638.1 678.9 639.0 678.7 C639.9 678.5 640.8 678.8 641.7 679.3 C642.6 679.8 643.5 680.9 644.4 681.5 C645.3 682.1 646.2 682.4 647.1 682.8 C648.0 683.1 648.9 683.3 649.8 683.4 C650.7 683.6 651.6 683.6 652.5 683.6 C653.4 683.7 654.3 684.3 655.2 683.8 C656.1 683.3 657.0 681.2 657.9 680.5 C658.9 679.8 659.8 679.5 660.7 679.4 C661.6 679.3 662.5 679.6 663.4 680.0 C664.3 680.3 665.2 680.8 666.1 681.5 C667.0 682.2 667.9 683.7 668.8 684.1 C669.7 684.6 670.6 684.3 671.5 684.1 C672.4 683.9 673.3 683.3 674.2 683.1 C675.1 683.0 676.0 683.3 676.9 683.2 C677.8 683.0 678.7 682.8 679.6 682.4 C680.5 681.9 681.4 681.8 682.4 680.5 C683.3 679.2 684.2 675.7 685.1 674.8 C686.0 674.0 686.9 674.3 687.8 675.4 C688.7 676.6 689.6 680.3 690.5 681.5 C691.4 682.7 692.3 682.5 693.2 682.6 C694.1 682.7 695.0 682.0 695.9 682.2 C696.8 682.3 697.7 683.4 698.6 683.5 C699.5 683.6 700.4 682.9 701.3 682.9 C702.2 682.9 703.1 683.8 704.0 683.4 C704.9 683.0 705.8 682.1 706.8 680.5 C707.7 678.9 708.6 674.8 709.5 673.8 C710.4 672.8 711.3 673.1 712.2 674.4 C713.1 675.7 714.0 680.1 714.9 681.5 C715.8 682.9 716.7 682.4 717.6 682.7 C718.5 683.0 719.4 683.0 720.3 683.2 C721.2 683.4 722.1 684.0 723.0 683.9 C723.9 683.8 724.8 682.5 725.7 682.6 C726.6 682.6 727.5 684.5 728.4 684.2 C729.3 683.8 730.3 681.5 731.2 680.5 C732.1 679.5 733.0 678.6 733.9 678.3 C734.8 678.1 735.7 678.4 736.6 678.9 C737.5 679.5 738.4 680.8 739.3 681.5 C740.2 682.2 741.5 683.1 742.0 683.4" fill="none" stroke="#f2495c" stroke-width="1.8" stroke-linejoin="round"/><path d="M94.0 685.7 C94.5 685.9 95.8 686.8 96.7 686.9 C97.6 686.9 98.5 686.3 99.4 686.2 C100.3 686.1 101.2 686.7 102.1 686.3 C103.0 685.8 103.9 684.4 104.8 683.5 C105.7 682.6 106.7 680.5 107.6 680.7 C108.5 680.8 109.4 683.6 110.3 684.5 C111.2 685.4 112.1 685.7 113.0 686.0 C113.9 686.3 114.8 686.3 115.7 686.4 C116.6 686.4 117.5 686.4 118.4 686.3 C119.3 686.2 120.2 685.8 121.1 685.8 C122.0 685.9 122.9 687.2 123.8 686.8 C124.7 686.4 125.6 684.8 126.5 683.5 C127.4 682.2 128.3 678.8 129.2 679.0 C130.2 679.2 131.1 683.2 132.0 684.5 C132.9 685.8 133.8 686.5 134.7 686.8 C135.6 687.2 136.5 686.7 137.4 686.7 C138.3 686.7 139.2 686.8 140.1 686.7 C141.0 686.7 141.9 686.5 142.8 686.5 C143.7 686.4 144.6 686.2 145.5 686.3 C146.4 686.3 147.3 687.3 148.2 686.9 C149.1 686.4 150.0 684.4 150.9 683.5 C151.8 682.6 152.7 681.0 153.6 681.2 C154.6 681.4 155.5 683.8 156.4 684.5 C157.3 685.2 158.2 685.3 159.1 685.6 C160.0 685.9 160.9 686.2 161.8 686.3 C162.7 686.3 163.6 686.0 164.5 686.0 C165.4 686.0 166.3 686.2 167.2 686.3 C168.1 686.5 169.0 687.3 169.9 686.8 C170.8 686.4 171.7 684.3 172.6 683.5 C173.5 682.7 174.4 682.1 175.3 682.3 C176.2 682.4 177.1 683.9 178.1 684.5 C179.0 685.1 179.9 685.8 180.8 686.1 C181.7 686.4 182.6 686.3 183.5 686.3 C184.4 686.3 185.3 686.3 186.2 686.3 C187.1 686.2 188.0 686.2 188.9 686.2 C189.8 686.1 190.7 685.7 191.6 685.7 C192.5 685.7 193.4 686.4 194.3 686.0 C195.2 685.7 196.1 684.4 197.0 683.5 C197.9 682.6 198.8 680.7 199.7 680.9 C200.6 681.1 201.5 683.5 202.5 684.5 C203.4 685.5 204.3 686.5 205.2 686.9 C206.1 687.2 207.0 686.5 207.9 686.4 C208.8 686.2 209.7 685.9 210.6 686.0 C211.5 686.1 212.4 687.2 213.3 686.8 C214.2 686.3 215.1 684.8 216.0 683.5 C216.9 682.2 217.8 678.8 218.7 679.0 C219.6 679.2 220.5 683.3 221.4 684.5 C222.3 685.7 223.2 685.6 224.1 686.0 C225.0 686.3 225.9 686.7 226.9 686.8 C227.8 686.8 228.7 686.8 229.6 686.3 C230.5 685.7 231.4 684.5 232.3 683.5 C233.2 682.5 234.1 680.1 235.0 680.3 C235.9 680.5 236.8 683.5 237.7 684.5 C238.6 685.5 239.5 685.8 240.4 686.0 C241.3 686.3 242.2 686.1 243.1 686.1 C244.0 686.1 244.9 685.8 245.8 685.8 C246.7 685.8 247.6 685.7 248.5 685.9 C249.4 686.1 250.4 686.8 251.3 686.9 C252.2 686.9 253.1 686.0 254.0 686.0 C254.9 686.0 255.8 687.3 256.7 686.8 C257.6 686.4 258.5 684.2 259.4 683.5 C260.3 682.8 261.2 682.5 262.1 682.7 C263.0 682.8 263.9 683.9 264.8 684.5 C265.7 685.1 266.6 686.0 267.5 686.3 C268.4 686.7 269.3 686.6 270.2 686.5 C271.1 686.5 272.0 686.0 272.9 685.9 C273.8 685.8 274.8 685.9 275.7 685.9 C276.6 685.8 277.5 685.4 278.4 685.5 C279.3 685.7 280.2 686.8 281.1 686.8 C282.0 686.9 282.9 686.5 283.8 685.9 C284.7 685.4 285.6 684.0 286.5 683.5 C287.4 683.0 288.3 682.6 289.2 682.7 C290.1 682.9 291.0 683.9 291.9 684.5 C292.8 685.1 293.7 686.0 294.6 686.2 C295.5 686.4 296.4 685.6 297.3 685.7 C298.3 685.7 299.2 686.3 300.1 686.4 C301.0 686.4 301.9 686.6 302.8 686.1 C303.7 685.6 304.6 684.5 305.5 683.5 C306.4 682.5 307.3 680.0 308.2 680.2 C309.1 680.3 310.0 683.6 310.9 684.5 C311.8 685.4 312.7 685.4 313.6 685.7 C314.5 685.9 315.4 686.0 316.3 686.0 C317.2 686.1 318.1 686.1 319.0 686.2 C319.9 686.2 320.8 686.3 321.7 686.3 C322.7 686.2 323.6 685.9 324.5 685.8 C325.4 685.8 326.3 686.2 327.2 686.2 C328.1 686.1 329.0 685.5 329.9 685.6 C330.8 685.6 331.7 686.0 332.6 686.2 C333.5 686.4 334.4 687.1 335.3 686.7 C336.2 686.2 337.1 684.3 338.0 683.5 C338.9 682.7 339.8 681.7 340.7 681.9 C341.6 682.1 342.5 683.8 343.4 684.5 C344.3 685.2 345.2 685.6 346.2 685.9 C347.1 686.2 348.0 686.3 348.9 686.4 C349.8 686.4 350.7 686.2 351.6 686.2 C352.5 686.2 353.4 686.4 354.3 686.4 C355.2 686.4 356.1 686.8 357.0 686.3 C357.9 685.9 358.8 684.2 359.7 683.5 C360.6 682.8 361.5 681.8 362.4 682.0 C363.3 682.1 364.2 683.9 365.1 684.5 C366.0 685.1 366.9 685.3 367.8 685.5 C368.7 685.7 369.6 685.6 370.6 685.7 C371.5 685.7 372.4 686.3 373.3 685.9 C374.2 685.5 375.1 684.2 376.0 683.5 C376.9 682.8 377.8 681.7 378.7 681.8 C379.6 682.0 380.5 683.8 381.4 684.5 C382.3 685.2 383.2 685.6 384.1 685.9 C385.0 686.2 385.9 686.2 386.8 686.2 C387.7 686.3 388.6 686.2 389.5 686.2 C390.4 686.1 391.3 685.9 392.2 686.0 C393.1 686.1 394.1 686.5 395.0 686.5 C395.9 686.6 396.8 686.5 397.7 686.3 C398.6 686.2 399.5 686.0 400.4 685.6 C401.3 685.1 402.2 684.4 403.1 683.5 C404.0 682.6 404.9 679.8 405.8 680.0 C406.7 680.2 407.6 683.4 408.5 684.5 C409.4 685.6 410.3 686.3 411.2 686.5 C412.1 686.7 413.0 685.7 413.9 685.7 C414.8 685.7 415.7 686.4 416.6 686.5 C417.5 686.5 418.5 685.8 419.4 685.8 C420.3 685.7 421.2 686.0 422.1 686.1 C423.0 686.2 423.9 687.1 424.8 686.6 C425.7 686.2 426.6 684.4 427.5 683.5 C428.4 682.6 429.3 681.2 430.2 681.4 C431.1 681.5 432.0 683.6 432.9 684.5 C433.8 685.4 434.7 686.2 435.6 686.5 C436.5 686.8 437.4 686.4 438.3 686.4 C439.2 686.3 440.1 686.1 441.0 686.2 C441.9 686.2 442.9 686.8 443.8 686.8 C444.7 686.8 445.6 686.2 446.5 686.0 C447.4 685.9 448.3 685.9 449.2 686.0 C450.1 686.2 451.0 686.7 451.9 686.7 C452.8 686.6 453.7 686.3 454.6 685.8 C455.5 685.2 456.4 684.4 457.3 683.5 C458.2 682.6 459.1 680.0 460.0 680.2 C460.9 680.4 461.8 683.4 462.7 684.5 C463.6 685.6 464.5 686.3 465.4 686.6 C466.4 686.8 467.3 686.1 468.2 685.9 C469.1 685.7 470.0 685.4 470.9 685.5 C471.8 685.6 472.7 686.5 473.6 686.6 C474.5 686.7 475.4 686.3 476.3 686.3 C477.2 686.3 478.1 686.4 479.0 686.4 C479.9 686.4 480.8 686.2 481.7 686.2 C482.6 686.1 483.5 686.0 484.4 685.9 C485.3 685.9 486.2 686.1 487.1 685.7 C488.0 685.3 488.9 684.2 489.8 683.5 C490.8 682.8 491.7 681.6 492.6 681.8 C493.5 681.9 494.4 683.7 495.3 684.5 C496.2 685.3 497.1 686.6 498.0 686.9 C498.9 687.2 499.8 686.4 500.7 686.3 C501.6 686.1 502.5 686.1 503.4 686.1 C504.3 686.1 505.2 686.3 506.1 686.3 C507.0 686.2 507.9 685.5 508.8 685.6 C509.7 685.6 510.6 686.9 511.5 686.5 C512.4 686.2 513.3 684.6 514.3 683.5 C515.2 682.4 516.1 679.9 517.0 680.1 C517.9 680.2 518.8 683.4 519.7 684.5 C520.6 685.6 521.5 686.3 522.4 686.6 C523.3 686.9 524.2 686.6 525.1 686.4 C526.0 686.3 526.9 686.0 527.8 685.5 C528.7 685.0 529.6 684.1 530.5 683.5 C531.4 682.9 532.3 681.7 533.2 681.9 C534.1 682.1 535.0 683.7 535.9 684.5 C536.8 685.3 537.7 686.6 538.7 686.9 C539.6 687.2 540.5 686.7 541.4 686.5 C542.3 686.3 543.2 686.1 544.1 685.6 C545.0 685.1 545.9 684.0 546.8 683.5 C547.7 683.0 548.6 682.2 549.5 682.4 C550.4 682.5 551.3 683.8 552.2 684.5 C553.1 685.2 554.0 686.0 554.9 686.4 C555.8 686.7 556.7 686.8 557.6 686.7 C558.5 686.5 559.4 685.6 560.3 685.7 C561.2 685.7 562.2 687.1 563.1 686.8 C564.0 686.4 564.9 684.1 565.8 683.5 C566.7 682.9 567.6 682.8 568.5 683.0 C569.4 683.1 570.3 683.9 571.2 684.5 C572.1 685.1 573.0 686.6 573.9 686.8 C574.8 687.0 575.7 685.8 576.6 685.7 C577.5 685.6 578.4 686.3 579.3 686.4 C580.2 686.4 581.1 686.2 582.0 686.1 C582.9 686.0 583.8 685.7 584.7 685.7 C585.6 685.8 586.6 686.4 587.5 686.4 C588.4 686.3 589.3 685.7 590.2 685.6 C591.1 685.4 592.0 686.0 592.9 685.7 C593.8 685.3 594.7 684.4 595.6 683.5 C596.5 682.6 597.4 680.4 598.3 680.5 C599.2 680.7 600.1 683.6 601.0 684.5 C601.9 685.4 602.8 685.6 603.7 685.9 C604.6 686.2 605.5 686.3 606.4 686.3 C607.3 686.3 608.2 686.1 609.1 685.7 C610.1 685.2 611.0 684.3 611.9 683.5 C612.8 682.7 613.7 680.4 614.6 680.6 C615.5 680.8 616.4 683.7 617.3 684.5 C618.2 685.3 619.1 685.4 620.0 685.7 C620.9 686.0 621.8 686.1 622.7 686.1 C623.6 686.1 624.5 685.9 625.4 685.9 C626.3 686.0 627.2 686.3 628.1 686.3 C629.0 686.4 629.9 686.1 630.8 686.2 C631.7 686.3 632.6 686.8 633.5 686.8 C634.5 686.8 635.4 686.6 636.3 686.0 C637.2 685.5 638.1 684.6 639.0 683.5 C639.9 682.4 640.8 679.1 641.7 679.2 C642.6 679.4 643.5 683.4 644.4 684.5 C645.3 685.6 646.2 685.6 647.1 685.9 C648.0 686.2 648.9 686.2 649.8 686.3 C650.7 686.4 651.6 686.5 652.5 686.4 C653.4 686.4 654.3 685.8 655.2 685.9 C656.1 686.0 657.0 686.8 657.9 686.8 C658.9 686.9 659.8 686.4 660.7 686.3 C661.6 686.1 662.5 685.9 663.4 685.8 C664.3 685.7 665.2 686.0 666.1 685.6 C667.0 685.2 667.9 684.4 668.8 683.5 C669.7 682.6 670.6 679.8 671.5 679.9 C672.4 680.1 673.3 683.4 674.2 684.5 C675.1 685.6 676.0 686.3 676.9 686.6 C677.8 686.8 678.7 686.4 679.6 686.2 C680.5 686.1 681.4 685.8 682.4 685.7 C683.3 685.6 684.2 685.8 685.1 685.8 C686.0 685.9 686.9 685.9 687.8 686.0 C688.7 686.1 689.6 686.6 690.5 686.5 C691.4 686.5 692.3 685.8 693.2 685.8 C694.1 685.7 695.0 686.4 695.9 686.5 C696.8 686.6 697.7 686.9 698.6 686.4 C699.5 685.9 700.4 684.7 701.3 683.5 C702.2 682.3 703.1 679.2 704.0 679.3 C704.9 679.5 705.8 683.5 706.8 684.5 C707.7 685.5 708.6 685.2 709.5 685.6 C710.4 685.9 711.3 686.6 712.2 686.7 C713.1 686.8 714.0 686.3 714.9 686.2 C715.8 686.1 716.7 686.2 717.6 686.1 C718.5 686.1 719.4 686.0 720.3 686.0 C721.2 686.0 722.1 686.0 723.0 686.1 C723.9 686.3 724.8 686.9 725.7 686.8 C726.6 686.8 727.5 686.2 728.4 685.7 C729.3 685.1 730.3 684.3 731.2 683.5 C732.1 682.7 733.0 681.0 733.9 681.1 C734.8 681.3 735.7 683.6 736.6 684.5 C737.5 685.4 738.4 686.3 739.3 686.5 C740.2 686.7 741.5 685.7 742.0 685.6" fill="none" stroke="#f2495c" stroke-width="1.8" stroke-linejoin="round"/></g><circle cx="263.5" cy="685.5" r="4.5" fill="#f2495c" opacity="0.85"/><circle cx="231" cy="676" r="2.5" fill="#f2495c"/><line x1="267.5" y1="471" x2="267.5" y2="688" stroke="#c4c6d0" stroke-width="1" stroke-dasharray="2 4" opacity="0.7"/><line x1="94" y1="532.5" x2="742" y2="532.5" stroke="#c4c6d0" stroke-width="1" stroke-dasharray="2 4" opacity="0.6"/><text x="117.5" y="706.5" font-size="12.3" fill="#c6c7d1" stroke="#c6c7d1" stroke-width="0.2" text-anchor="middle">16:45</text><text x="171.5" y="706.5" font-size="12.3" fill="#c6c7d1" stroke="#c6c7d1" stroke-width="0.2" text-anchor="middle">16:50</text><text x="225.5" y="706.5" font-size="12.3" fill="#c6c7d1" stroke="#c6c7d1" stroke-width="0.2" text-anchor="middle">16:55</text><text x="279.5" y="706.5" font-size="12.3" fill="#c6c7d1" stroke="#c6c7d1" stroke-width="0.2" text-anchor="middle">17:00</text><text x="333.5" y="706.5" font-size="12.3" fill="#c6c7d1" stroke="#c6c7d1" stroke-width="0.2" text-anchor="middle">17:05</text><text x="387.5" y="706.5" font-size="12.3" fill="#c6c7d1" stroke="#c6c7d1" stroke-width="0.2" text-anchor="middle">17:10</text><text x="441.5" y="706.5" font-size="12.3" fill="#c6c7d1" stroke="#c6c7d1" stroke-width="0.2" text-anchor="middle">17:15</text><text x="495.5" y="706.5" font-size="12.3" fill="#c6c7d1" stroke="#c6c7d1" stroke-width="0.2" text-anchor="middle">17:20</text><text x="549.5" y="706.5" font-size="12.3" fill="#c6c7d1" stroke="#c6c7d1" stroke-width="0.2" text-anchor="middle">17:25</text><text x="603.5" y="706.5" font-size="12.3" fill="#c6c7d1" stroke="#c6c7d1" stroke-width="0.2" text-anchor="middle">17:30</text><text x="657.5" y="706.5" font-size="12.3" fill="#c6c7d1" stroke="#c6c7d1" stroke-width="0.2" text-anchor="middle">17:35</text><text x="711.5" y="706.5" font-size="12.3" fill="#c6c7d1" stroke="#c6c7d1" stroke-width="0.2" text-anchor="middle">17:40</text><text x="88" y="475.3" font-size="12.3" letter-spacing="0" fill="#c6c7d1" stroke="#c6c7d1" stroke-width="0.2" text-anchor="end">100%</text><text x="88" y="518.6999999999999" font-size="12.3" letter-spacing="0" fill="#c6c7d1" stroke="#c6c7d1" stroke-width="0.2" text-anchor="end">80%</text><text x="88" y="562.0999999999999" font-size="12.3" letter-spacing="0" fill="#c6c7d1" stroke="#c6c7d1" stroke-width="0.2" text-anchor="end">60%</text><text x="88" y="605.5" font-size="12.3" letter-spacing="0" fill="#c6c7d1" stroke="#c6c7d1" stroke-width="0.2" text-anchor="end">40%</text><text x="88" y="648.9" font-size="12.3" letter-spacing="0" fill="#c6c7d1" stroke="#c6c7d1" stroke-width="0.2" text-anchor="end">20%</text><text x="88" y="692.3" font-size="12.3" letter-spacing="0" fill="#c6c7d1" stroke="#c6c7d1" stroke-width="0.2" text-anchor="end">0%</text><text x="34.8" y="580" font-size="12.3" fill="#c6c7d1" text-anchor="middle" transform="rotate(-90 34.8 580)">Percent</text></g></svg><div class="t" style="left:763px;top:43.30000000000001px;font-size:12.8px;line-height:17px;color:#6e9fff;-webkit-text-stroke:0.2px #6e9fff">Name</div><div class="abs" style="left:734px;top:63.19999999999999px;width:195px;height:1px;background:rgba(204,204,220,0.12)"></div><div class="abs" style="left:734px;top:87.0px;width:195px;height:1px;background:rgba(204,204,220,0.12)"></div><div class="abs" style="left:734px;top:110.79999999999995px;width:195px;height:1px;background:rgba(204,204,220,0.12)"></div><div class="abs" style="left:742px;top:73.69999999999999px;width:14px;height:4px;border-radius:2px;background:#f2495c"></div><div class="t" style="left:763px;top:67.19999999999999px;font-size:12.8px;line-height:17px;color:#ccccdc">config-reloader REQUESTS</div><div class="abs" style="left:742px;top:97.29999999999995px;width:14px;height:4px;border-radius:2px;background:#f2495c"></div><div class="t" style="left:763px;top:90.79999999999995px;font-size:12.8px;line-height:17px;color:#ccccdc">config-reloader LIMITS</div><div class="abs" style="left:914px;top:0px;width:24px;height:32px;background:#22252b;border-radius:2px"></div><svg class="abs" style="left:914px;top:0px" width="24" height="32"><circle cx="12" cy="11" r="1.3" fill="#ccccdc"/><circle cx="12" cy="16" r="1.3" fill="#ccccdc"/><circle cx="12" cy="21" r="1.3" fill="#ccccdc"/></svg><svg class="abs" style="left:928px;top:285px" width="8" height="8"><path d="M6.5 1v5.5H1" fill="none" stroke="#8e8f99" stroke-width="1.2"/></svg><div class="abs" style="left:260px;top:119.5px;width:256px;height:72px;background:#22252b;border-radius:2px;box-shadow:0 4px 8px rgba(0,0,0,0.45)"></div><div class="t" style="left:268px;top:128.0px;font-size:12.8px;line-height:17px;color:#ccccdc;-webkit-text-stroke:0.15px #ccccdc">2024-04-11 16:58:45</div><div class="abs" style="left:268px;top:153.5px;width:14px;height:4px;border-radius:2px;background:#f2495c"></div><div class="t" style="left:289.5px;top:147.0px;font-size:12.8px;line-height:17px;color:#ccccdc">config-reloader REQUESTS</div><div class="t" style="right:431px;top:147.0px;font-size:12.8px;line-height:17px;color:#ccccdc;text-align:right">1.97%</div><div class="abs" style="left:268px;top:172.60000000000002px;width:14px;height:4px;border-radius:2px;background:#f2495c"></div><div class="t" style="left:289.5px;top:166.10000000000002px;font-size:12.8px;line-height:17px;color:#ccccdc">config-reloader LIMITS</div><div class="t" style="right:431px;top:166.10000000000002px;font-size:12.8px;line-height:17px;color:#ccccdc;text-align:right">0.601%</div></div>
<div class="panel" style="left:964px;top:422px;width:940px;height:296px"><div class="ptitle">Memory Usage / Requests &amp; Limits by container</div><svg class="abs" style="left:-1px;top:-1px" width="940" height="296" font-family="Liberation Sans, sans-serif"><g transform="translate(-964,-422)"><defs><linearGradient id="g964_422_0" x1="0" y1="576" x2="0" y2="688" gradientUnits="userSpaceOnUse"><stop offset="0" stop-color="#73bf69" stop-opacity="0.26"/><stop offset="1" stop-color="#73bf69" stop-opacity="0.0"/></linearGradient><linearGradient id="g964_422_1" x1="0" y1="636" x2="0" y2="688" gradientUnits="userSpaceOnUse"><stop offset="0" stop-color="#fade2a" stop-opacity="0.12"/><stop offset="1" stop-color="#fade2a" stop-opacity="0.0"/></linearGradient><clipPath id="c964_422"><rect x="1042" y="467" width="648" height="221"/></clipPath></defs><rect x="1042" y="471.0" width="648" height="43.39999999999998" fill="rgba(242,73,92,0.15)"/><rect x="1042" y="514.4" width="648" height="21.700000000000045" fill="rgba(250,222,42,0.15)"/><rect x="1042" y="536.1" width="648" height="86.79999999999995" fill="rgba(115,191,105,0.15)"/><rect x="1042" y="622.9" width="648" height="21.700000000000045" fill="rgba(250,222,42,0.15)"/><rect x="1042" y="644.6" width="648" height="43.39999999999998" fill="rgba(242,73,92,0.15)"/><rect x="1065.0" y="471" width="1" height="217" fill="rgba(204,204,220,0.12)"/><rect x="1119.0" y="471" width="1" height="217" fill="rgba(204,204,220,0.12)"/><rect x="1173.0" y="471" width="1" height="217" fill="rgba(204,204,220,0.12)"/><rect x="1227.0" y="471" width="1" height="217" fill="rgba(204,204,220,0.12)"/><rect x="1281.0" y="471" width="1" height="217" fill="rgba(204,204,220,0.12)"/><rect x="1335.0" y="471" width="1" height="217" fill="rgba(204,204,220,0.12)"/><rect x="1389.0" y="471" width="1" height="217" fill="rgba(204,204,220,0.12)"/><rect x="1443.0" y="471" width="1" height="217" fill="rgba(204,204,220,0.12)"/><rect x="1497.0" y="471" width="1" height="217" fill="rgba(204,204,220,0.12)"/><rect x="1551.0" y="471" width="1" height="217" fill="rgba(204,204,220,0.12)"/><rect x="1605.0" y="471" width="1" height="217" fill="rgba(204,204,220,0.12)"/><rect x="1659.0" y="471" width="1" height="217" fill="rgba(204,204,220,0.12)"/><rect x="1042" y="470.5" width="648" height="1" fill="rgba(204,204,220,0.12)"/><rect x="1042" y="513.9" width="648" height="1" fill="rgba(204,204,220,0.12)"/><rect x="1042" y="557.3" width="648" height="1" fill="rgba(204,204,220,0.12)"/><rect x="1042" y="600.7" width="648" height="1" fill="rgba(204,204,220,0.12)"/><rect x="1042" y="644.1" width="648" height="1" fill="rgba(204,204,220,0.12)"/><rect x="1042" y="687.5" width="648" height="1" fill="rgba(204,204,220,0.12)"/><g clip-path="url(#c964_422)"><path d="M1042.0 576.7 L1044.7 576.7 L1047.4 576.7 L1050.1 576.7 L1052.8 576.7 L1055.6 576.7 L1058.3 576.7 L1061.0 576.7 L1063.7 576.7 L1066.4 576.7 L1069.1 576.7 L1071.8 576.7 L1074.5 576.7 L1077.2 576.7 L1080.0 576.7 L1082.7 576.7 L1085.4 576.7 L1088.1 576.7 L1090.8 576.7 L1093.5 576.7 L1096.2 576.7 L1098.9 576.7 L1101.6 576.7 L1104.4 576.7 L1107.1 576.7 L1109.8 576.7 L1112.5 576.7 L1115.2 576.7 L1117.9 576.7 L1120.6 576.7 L1123.3 576.7 L1126.1 576.7 L1128.8 576.7 L1131.5 576.7 L1134.2 576.7 L1136.9 576.7 L1139.6 576.7 L1142.3 576.7 L1145.0 576.7 L1147.7 576.7 L1150.5 576.7 L1153.2 576.7 L1155.9 576.7 L1158.6 576.7 L1161.3 576.7 L1164.0 576.7 L1166.7 576.7 L1169.4 576.7 L1172.1 576.7 L1174.9 576.7 L1177.6 576.0 L1180.3 576.0 L1183.0 576.0 L1185.7 576.0 L1188.4 576.0 L1191.1 576.0 L1193.8 576.0 L1196.5 576.0 L1199.3 576.0 L1202.0 576.0 L1204.7 576.0 L1207.4 576.0 L1210.1 576.0 L1212.8 576.0 L1215.5 576.0 L1218.2 576.0 L1220.9 576.0 L1223.7 576.0 L1226.4 576.0 L1229.1 576.0 L1231.8 576.0 L1234.5 576.0 L1237.2 576.0 L1239.9 576.0 L1242.6 576.0 L1245.3 576.0 L1248.1 576.0 L1250.8 576.0 L1253.5 576.0 L1256.2 576.0 L1258.9 576.0 L1261.6 576.0 L1264.3 576.0 L1267.0 576.0 L1269.7 576.0 L1272.5 576.0 L1275.2 576.0 L1277.9 576.0 L1280.6 576.0 L1283.3 576.0 L1286.0 576.0 L1288.7 576.0 L1291.4 576.0 L1294.2 576.0 L1296.9 576.0 L1299.6 576.0 L1302.3 576.0 L1305.0 576.0 L1307.7 576.0 L1310.4 576.0 L1313.1 576.0 L1315.8 576.0 L1318.6 576.0 L1321.3 576.0 L1324.0 576.0 L1326.7 576.0 L1329.4 576.0 L1332.1 576.0 L1334.8 576.0 L1337.5 576.0 L1340.2 576.0 L1343.0 576.0 L1345.7 576.0 L1348.4 576.0 L1351.1 576.0 L1353.8 576.0 L1356.5 576.0 L1359.2 576.0 L1361.9 576.0 L1364.6 576.0 L1367.4 576.0 L1370.1 576.0 L1372.8 576.0 L1375.5 576.0 L1378.2 576.0 L1380.9 576.0 L1383.6 576.0 L1386.3 576.0 L1389.0 576.0 L1391.8 576.0 L1394.5 576.0 L1397.2 576.0 L1399.9 576.0 L1402.6 576.0 L1405.3 576.0 L1408.0 576.0 L1410.7 576.0 L1413.4 576.0 L1416.2 576.0 L1418.9 576.0 L1421.6 576.0 L1424.3 576.0 L1427.0 576.0 L1429.7 576.0 L1432.4 576.0 L1435.1 576.0 L1437.8 576.0 L1440.6 576.0 L1443.3 576.0 L1446.0 576.0 L1448.7 576.0 L1451.4 576.0 L1454.1 576.0 L1456.8 576.0 L1459.5 576.0 L1462.3 576.0 L1465.0 576.0 L1467.7 576.0 L1470.4 576.0 L1473.1 574.8 L1475.8 574.8 L1478.5 576.0 L1481.2 576.0 L1483.9 576.0 L1486.7 576.0 L1489.4 576.0 L1492.1 576.0 L1494.8 576.0 L1497.5 576.0 L1500.2 576.0 L1502.9 576.0 L1505.6 576.0 L1508.3 576.0 L1511.1 576.0 L1513.8 576.0 L1516.5 576.0 L1519.2 576.0 L1521.9 576.0 L1524.6 576.0 L1527.3 576.0 L1530.0 576.0 L1532.7 576.0 L1535.5 576.0 L1538.2 576.0 L1540.9 576.0 L1543.6 576.0 L1546.3 576.0 L1549.0 576.0 L1551.7 576.0 L1554.4 576.0 L1557.1 576.0 L1559.9 576.0 L1562.6 576.0 L1565.3 576.0 L1568.0 576.0 L1570.7 576.0 L1573.4 576.0 L1576.1 576.0 L1578.8 576.0 L1581.5 576.0 L1584.3 576.0 L1587.0 576.0 L1589.7 576.0 L1592.4 576.0 L1595.1 576.0 L1597.8 576.0 L1600.5 576.0 L1603.2 576.0 L1605.9 576.0 L1608.7 576.0 L1611.4 576.0 L1614.1 576.0 L1616.8 576.0 L1619.5 576.0 L1622.2 576.0 L1624.9 576.0 L1627.6 576.0 L1630.4 576.0 L1633.1 576.0 L1635.8 576.0 L1638.5 576.0 L1641.2 576.0 L1643.9 576.0 L1646.6 576.0 L1649.3 576.0 L1652.0 576.0 L1654.8 576.0 L1657.5 576.0 L1660.2 576.0 L1662.9 576.0 L1665.6 576.0 L1668.3 576.0 L1671.0 576.0 L1673.7 576.0 L1676.4 576.0 L1679.2 576.0 L1681.9 576.0 L1684.6 576.0 L1687.3 576.0 L1690.0 576.0 L1690.0 688 L1042.0 688 Z" fill="url(#g964_422_0)"/><path d="M1042.0 638.2 L1057.4 638.2 L1059.9 642.2 L1062.5 640.8 L1066.0 640.8 L1068.5 639.1 L1073.7 638.8 L1075.4 637.9 L1100.3 637.9 L1102.9 639.6 L1130.4 639.6 L1132.2 638.8 L1167.4 638.8 L1169.1 643.9 L1179.5 643.9 L1181.2 642.2 L1189.8 641.7 L1190.6 640.8 L1195.8 640.5 L1196.7 640.0 L1204.4 639.4 L1205.2 638.6 L1212.1 638.2 L1215.6 636.9 L1234.5 636.9 L1237.1 639.6 L1255.1 640.0 L1256.8 641.2 L1262.9 641.2 L1264.6 640.0 L1268.9 638.8 L1278.3 638.8 L1280.1 640.0 L1294.7 640.0 L1296.4 638.2 L1324.8 638.2 L1326.5 639.4 L1346.3 639.4 L1348.0 640.3 L1361.7 640.3 L1367.9 639.9 L1369.6 641.2 L1408.0 641.2 L1410.6 639.1 L1422.0 639.1 L1423.7 637.3 L1456.9 637.3 L1458.6 642.0 L1463.0 642.0 L1464.7 641.2 L1468.2 640.8 L1469.1 639.4 L1476.1 639.4 L1477.8 637.7 L1499.6 637.7 L1502.2 645.0 L1511.0 645.0 L1512.7 641.7 L1517.1 641.2 L1517.9 640.6 L1545.9 640.6 L1548.5 642.0 L1551.1 642.0 L1552.8 640.6 L1609.6 640.6 L1612.2 642.9 L1650.6 642.9 L1653.2 640.8 L1675.0 640.8 L1676.8 639.4 L1689.0 639.4 L1689.0 688 L1042.0 688 Z" fill="url(#g964_422_1)"/><path d="M1042.0 576.7 L1044.7 576.7 L1047.4 576.7 L1050.1 576.7 L1052.8 576.7 L1055.6 576.7 L1058.3 576.7 L1061.0 576.7 L1063.7 576.7 L1066.4 576.7 L1069.1 576.7 L1071.8 576.7 L1074.5 576.7 L1077.2 576.7 L1080.0 576.7 L1082.7 576.7 L1085.4 576.7 L1088.1 576.7 L1090.8 576.7 L1093.5 576.7 L1096.2 576.7 L1098.9 576.7 L1101.6 576.7 L1104.4 576.7 L1107.1 576.7 L1109.8 576.7 L1112.5 576.7 L1115.2 576.7 L1117.9 576.7 L1120.6 576.7 L1123.3 576.7 L1126.1 576.7 L1128.8 576.7 L1131.5 576.7 L1134.2 576.7 L1136.9 576.7 L1139.6 576.7 L1142.3 576.7 L1145.0 576.7 L1147.7 576.7 L1150.5 576.7 L1153.2 576.7 L1155.9 576.7 L1158.6 576.7 L1161.3 576.7 L1164.0 576.7 L1166.7 576.7 L1169.4 576.7 L1172.1 576.7 L1174.9 576.7 L1177.6 576.0 L1180.3 576.0 L1183.0 576.0 L1185.7 576.0 L1188.4 576.0 L1191.1 576.0 L1193.8 576.0 L1196.5 576.0 L1199.3 576.0 L1202.0 576.0 L1204.7 576.0 L1207.4 576.0 L1210.1 576.0 L1212.8 576.0 L1215.5 576.0 L1218.2 576.0 L1220.9 576.0 L1223.7 576.0 L1226.4 576.0 L1229.1 576.0 L1231.8 576.0 L1234.5 576.0 L1237.2 576.0 L1239.9 576.0 L1242.6 576.0 L1245.3 576.0 L1248.1 576.0 L1250.8 576.0 L1253.5 576.0 L1256.2 576.0 L1258.9 576.0 L1261.6 576.0 L1264.3 576.0 L1267.0 576.0 L1269.7 576.0 L1272.5 576.0 L1275.2 576.0 L1277.9 576.0 L1280.6 576.0 L1283.3 576.0 L1286.0 576.0 L1288.7 576.0 L1291.4 576.0 L1294.2 576.0 L1296.9 576.0 L1299.6 576.0 L1302.3 576.0 L1305.0 576.0 L1307.7 576.0 L1310.4 576.0 L1313.1 576.0 L1315.8 576.0 L1318.6 576.0 L1321.3 576.0 L1324.0 576.0 L1326.7 576.0 L1329.4 576.0 L1332.1 576.0 L1334.8 576.0 L1337.5 576.0 L1340.2 576.0 L1343.0 576.0 L1345.7 576.0 L1348.4 576.0 L1351.1 576.0 L1353.8 576.0 L1356.5 576.0 L1359.2 576.0 L1361.9 576.0 L1364.6 576.0 L1367.4 576.0 L1370.1 576.0 L1372.8 576.0 L1375.5 576.0 L1378.2 576.0 L1380.9 576.0 L1383.6 576.0 L1386.3 576.0 L1389.0 576.0 L1391.8 576.0 L1394.5 576.0 L1397.2 576.0 L1399.9 576.0 L1402.6 576.0 L1405.3 576.0 L1408.0 576.0 L1410.7 576.0 L1413.4 576.0 L1416.2 576.0 L1418.9 576.0 L1421.6 576.0 L1424.3 576.0 L1427.0 576.0 L1429.7 576.0 L1432.4 576.0 L1435.1 576.0 L1437.8 576.0 L1440.6 576.0 L1443.3 576.0 L1446.0 576.0 L1448.7 576.0 L1451.4 576.0 L1454.1 576.0 L1456.8 576.0 L1459.5 576.0 L1462.3 576.0 L1465.0 576.0 L1467.7 576.0 L1470.4 576.0 L1473.1 574.8 L1475.8 574.8 L1478.5 576.0 L1481.2 576.0 L1483.9 576.0 L1486.7 576.0 L1489.4 576.0 L1492.1 576.0 L1494.8 576.0 L1497.5 576.0 L1500.2 576.0 L1502.9 576.0 L1505.6 576.0 L1508.3 576.0 L1511.1 576.0 L1513.8 576.0 L1516.5 576.0 L1519.2 576.0 L1521.9 576.0 L1524.6 576.0 L1527.3 576.0 L1530.0 576.0 L1532.7 576.0 L1535.5 576.0 L1538.2 576.0 L1540.9 576.0 L1543.6 576.0 L1546.3 576.0 L1549.0 576.0 L1551.7 576.0 L1554.4 576.0 L1557.1 576.0 L1559.9 576.0 L1562.6 576.0 L1565.3 576.0 L1568.0 576.0 L1570.7 576.0 L1573.4 576.0 L1576.1 576.0 L1578.8 576.0 L1581.5 576.0 L1584.3 576.0 L1587.0 576.0 L1589.7 576.0 L1592.4 576.0 L1595.1 576.0 L1597.8 576.0 L1600.5 576.0 L1603.2 576.0 L1605.9 576.0 L1608.7 576.0 L1611.4 576.0 L1614.1 576.0 L1616.8 576.0 L1619.5 576.0 L1622.2 576.0 L1624.9 576.0 L1627.6 576.0 L1630.4 576.0 L1633.1 576.0 L1635.8 576.0 L1638.5 576.0 L1641.2 576.0 L1643.9 576.0 L1646.6 576.0 L1649.3 576.0 L1652.0 576.0 L1654.8 576.0 L1657.5 576.0 L1660.2 576.0 L1662.9 576.0 L1665.6 576.0 L1668.3 576.0 L1671.0 576.0 L1673.7 576.0 L1676.4 576.0 L1679.2 576.0 L1681.9 576.0 L1684.6 576.0 L1687.3 576.0 L1690.0 576.0" fill="none" stroke="#73bf69" stroke-width="1.8" stroke-linejoin="round"/><path d="M1042.0 638.2 L1057.4 638.2 L1059.9 642.2 L1062.5 640.8 L1066.0 640.8 L1068.5 639.1 L1073.7 638.8 L1075.4 637.9 L1100.3 637.9 L1102.9 639.6 L1130.4 639.6 L1132.2 638.8 L1167.4 638.8 L1169.1 643.9 L1179.5 643.9 L1181.2 642.2 L1189.8 641.7 L1190.6 640.8 L1195.8 640.5 L1196.7 640.0 L1204.4 639.4 L1205.2 638.6 L1212.1 638.2 L1215.6 636.9 L1234.5 636.9 L1237.1 639.6 L1255.1 640.0 L1256.8 641.2 L1262.9 641.2 L1264.6 640.0 L1268.9 638.8 L1278.3 638.8 L1280.1 640.0 L1294.7 640.0 L1296.4 638.2 L1324.8 638.2 L1326.5 639.4 L1346.3 639.4 L1348.0 640.3 L1361.7 640.3 L1367.9 639.9 L1369.6 641.2 L1408.0 641.2 L1410.6 639.1 L1422.0 639.1 L1423.7 637.3 L1456.9 637.3 L1458.6 642.0 L1463.0 642.0 L1464.7 641.2 L1468.2 640.8 L1469.1 639.4 L1476.1 639.4 L1477.8 637.7 L1499.6 637.7 L1502.2 645.0 L1511.0 645.0 L1512.7 641.7 L1517.1 641.2 L1517.9 640.6 L1545.9 640.6 L1548.5 642.0 L1551.1 642.0 L1552.8 640.6 L1609.6 640.6 L1612.2 642.9 L1650.6 642.9 L1653.2 640.8 L1675.0 640.8 L1676.8 639.4 L1689.0 639.4" fill="none" stroke="#fade2a" stroke-width="1.8" stroke-linejoin="round"/></g><line x1="1215.3" y1="471" x2="1215.3" y2="688" stroke="#c4c6d0" stroke-width="1" stroke-dasharray="2 4" opacity="0.7"/><line x1="1042" y1="532.5" x2="1690" y2="532.5" stroke="#c4c6d0" stroke-width="1" stroke-dasharray="2 4" opacity="0.6"/><text x="1065.5" y="706.5" font-size="12.3" fill="#c6c7d1" stroke="#c6c7d1" stroke-width="0.2" text-anchor="middle">16:45</text><text x="1119.5" y="706.5" font-size="12.3" fill="#c6c7d1" stroke="#c6c7d1" stroke-width="0.2" text-anchor="middle">16:50</text><text x="1173.5" y="706.5" font-size="12.3" fill="#c6c7d1" stroke="#c6c7d1" stroke-width="0.2" text-anchor="middle">16:55</text><text x="1227.5" y="706.5" font-size="12.3" fill="#c6c7d1" stroke="#c6c7d1" stroke-width="0.2" text-anchor="middle">17:00</text><text x="1281.5" y="706.5" font-size="12.3" fill="#c6c7d1" stroke="#c6c7d1" stroke-width="0.2" text-anchor="middle">17:05</text><text x="1335.5" y="706.5" font-size="12.3" fill="#c6c7d1" stroke="#c6c7d1" stroke-width="0.2" text-anchor="middle">17:10</text><text x="1389.5" y="706.5" font-size="12.3" fill="#c6c7d1" stroke="#c6c7d1" stroke-width="0.2" text-anchor="middle">17:15</text><text x="1443.5" y="706.5" font-size="12.3" fill="#c6c7d1" stroke="#c6c7d1" stroke-width="0.2" text-anchor="middle">17:20</text><text x="1497.5" y="706.5" font-size="12.3" fill="#c6c7d1" stroke="#c6c7d1" stroke-width="0.2" text-anchor="middle">17:25</text><text x="1551.5" y="706.5" font-size="12.3" fill="#c6c7d1" stroke="#c6c7d1" stroke-width="0.2" text-anchor="middle">17:30</text><text x="1605.5" y="706.5" font-size="12.3" fill="#c6c7d1" stroke="#c6c7d1" stroke-width="0.2" text-anchor="middle">17:35</text><text x="1659.5" y="706.5" font-size="12.3" fill="#c6c7d1" stroke="#c6c7d1" stroke-width="0.2" text-anchor="middle">17:40</text><text x="1036" y="475.3" font-size="12.3" letter-spacing="0" fill="#c6c7d1" stroke="#c6c7d1" stroke-width="0.2" text-anchor="end">100%</text><text x="1036" y="518.6999999999999" font-size="12.3" letter-spacing="0" fill="#c6c7d1" stroke="#c6c7d1" stroke-width="0.2" text-anchor="end">80%</text><text x="1036" y="562.0999999999999" font-size="12.3" letter-spacing="0" fill="#c6c7d1" stroke="#c6c7d1" stroke-width="0.2" text-anchor="end">60%</text><text x="1036" y="605.5" font-size="12.3" letter-spacing="0" fill="#c6c7d1" stroke="#c6c7d1" stroke-width="0.2" text-anchor="end">40%</text><text x="1036" y="648.9" font-size="12.3" letter-spacing="0" fill="#c6c7d1" stroke="#c6c7d1" stroke-width="0.2" text-anchor="end">20%</text><text x="1036" y="692.3" font-size="12.3" letter-spacing="0" fill="#c6c7d1" stroke="#c6c7d1" stroke-width="0.2" text-anchor="end">0%</text><text x="982.8" y="580" font-size="12.3" fill="#c6c7d1" text-anchor="middle" transform="rotate(-90 982.8 580)">Percent</text></g></svg><div class="t" style="left:763px;top:43.30000000000001px;font-size:12.8px;line-height:17px;color:#6e9fff;-webkit-text-stroke:0.2px #6e9fff">Name</div><div class="abs" style="left:734px;top:63.19999999999999px;width:195px;height:1px;background:rgba(204,204,220,0.12)"></div><div class="abs" style="left:734px;top:87.0px;width:195px;height:1px;background:rgba(204,204,220,0.12)"></div><div class="abs" style="left:734px;top:110.79999999999995px;width:195px;height:1px;background:rgba(204,204,220,0.12)"></div><div class="abs" style="left:734px;top:134.60000000000002px;width:195px;height:1px;background:rgba(204,204,220,0.12)"></div><div class="abs" style="left:742px;top:73.69999999999999px;width:14px;height:4px;border-radius:2px;background:#fade2a"></div><div class="t" style="left:763px;top:67.19999999999999px;font-size:12.8px;line-height:17px;color:#ccccdc">alertmanager REQUESTS</div><div class="abs" style="left:742px;top:97.29999999999995px;width:14px;height:4px;border-radius:2px;background:#73bf69"></div><div class="t" style="left:763px;top:90.79999999999995px;font-size:12.8px;line-height:17px;color:#ccccdc">config-reloader REQUESTS</div><div class="abs" style="left:742px;top:120.89999999999998px;width:14px;height:4px;border-radius:2px;background:#73bf69"></div><div class="t" style="left:763px;top:114.39999999999998px;font-size:12.8px;line-height:17px;color:#ccccdc">config-reloader LIMITS</div></div>
<div class="panel" style="left:16px;top:726px;width:940px;height:296px"><div class="ptitle">CPU Usage by container</div><svg class="abs" style="left:-1px;top:-1px" width="940" height="296" font-family="Liberation Sans, sans-serif"><g transform="translate(-16,-726)"><defs><linearGradient id="g16_726_0" x1="0" y1="795" x2="0" y2="992" gradientUnits="userSpaceOnUse"><stop offset="0" stop-color="#73bf69" stop-opacity="0.16"/><stop offset="1" stop-color="#73bf69" stop-opacity="0.02"/></linearGradient><linearGradient id="g16_726_1" x1="0" y1="915" x2="0" y2="992" gradientUnits="userSpaceOnUse"><stop offset="0" stop-color="#f2cc0c" stop-opacity="0.1"/><stop offset="1" stop-color="#f2cc0c" stop-opacity="0.0"/></linearGradient><clipPath id="c16_726"><rect x="102" y="771" width="511" height="220.79999999999995"/></clipPath></defs><rect x="162.64966666666666" y="775" width="1" height="221" fill="rgba(204,204,220,0.12)"/><rect x="247.81633333333332" y="775" width="1" height="221" fill="rgba(204,204,220,0.12)"/><rect x="332.983" y="775" width="1" height="221" fill="rgba(204,204,220,0.12)"/><rect x="418.14966666666663" y="775" width="1" height="221" fill="rgba(204,204,220,0.12)"/><rect x="503.3163333333333" y="775" width="1" height="221" fill="rgba(204,204,220,0.12)"/><rect x="588.483" y="775" width="1" height="221" fill="rgba(204,204,220,0.12)"/><rect x="104" y="991.3" width="513" height="1" fill="rgba(204,204,220,0.12)"/><rect x="104" y="941.2249999999999" width="513" height="1" fill="rgba(204,204,220,0.12)"/><rect x="104" y="891.15" width="513" height="1" fill="rgba(204,204,220,0.12)"/><rect x="104" y="841.0749999999999" width="513" height="1" fill="rgba(204,204,220,0.12)"/><rect x="104" y="791.0" width="513" height="1" fill="rgba(204,204,220,0.12)"/><g clip-path="url(#c16_726)"><path d="M100.0 808.4 C100.8 808.2 103.1 805.2 104.6 807.3 C106.1 809.4 107.6 814.2 108.9 821.2 C110.1 828.1 110.8 848.2 112.1 848.9 C113.3 849.6 114.9 832.4 116.3 825.4 C117.7 818.5 119.2 809.1 120.6 807.3 C122.0 805.5 123.4 808.0 124.9 814.8 C126.3 821.5 127.7 846.6 129.1 847.8 C130.5 849.1 132.0 826.9 133.4 822.2 C134.8 817.6 136.2 820.1 137.6 820.1 C139.1 820.1 140.3 815.7 141.9 822.2 C143.5 828.8 145.6 861.5 147.2 859.6 C148.8 857.6 150.1 819.6 151.5 810.5 C152.9 801.4 154.5 805.9 155.8 805.2 C157.0 804.5 157.7 797.5 159.0 806.2 C160.2 815.0 161.8 855.6 163.2 857.4 C164.7 859.2 166.1 824.5 167.5 816.9 C168.9 809.3 170.2 814.1 171.8 811.6 C173.4 809.1 175.0 794.5 177.1 802.0 C179.2 809.4 182.6 853.2 184.6 856.4 C186.5 859.6 187.2 827.0 188.8 821.2 C190.4 815.3 192.4 822.2 194.1 821.2 C195.9 820.1 197.3 818.0 199.5 814.8 C201.6 811.6 205.0 803.8 206.9 802.0 C208.9 800.2 209.3 792.6 211.2 804.1 C213.2 815.7 216.7 868.3 218.7 871.3 C220.6 874.3 221.5 829.9 222.9 822.2 C224.4 814.6 225.8 826.7 227.2 825.4 C228.6 824.2 229.9 807.5 231.5 814.8 C233.1 822.1 235.2 868.4 236.8 869.1 C238.4 869.9 239.8 826.0 241.1 819.0 C242.3 812.1 243.0 828.3 244.3 827.6 C245.5 826.9 246.9 808.2 248.5 814.8 C250.1 821.4 252.2 865.4 253.8 867.0 C255.4 868.6 256.9 830.8 258.1 824.4 C259.4 818.0 259.9 830.1 261.3 828.6 C262.7 827.2 265.0 812.1 266.6 815.8 C268.2 819.6 269.5 852.1 270.9 851.0 C272.3 850.0 273.9 815.3 275.2 809.4 C276.4 803.6 276.9 815.3 278.4 815.8 C279.8 816.4 282.1 807.1 283.7 812.6 C285.3 818.2 286.0 851.2 288.0 848.9 C289.9 846.6 293.3 804.5 295.4 798.8 C297.6 793.1 298.4 805.4 300.8 814.8 C303.1 824.2 307.2 858.5 309.3 855.3 C311.4 852.1 312.1 803.0 313.6 795.6 C315.0 788.1 316.4 809.3 317.8 810.5 C319.2 811.8 320.7 803.4 322.1 803.0 C323.5 802.7 324.7 807.3 326.3 808.4 C327.9 809.4 330.1 807.5 331.7 809.4 C333.3 811.4 334.7 813.0 335.9 820.1 C337.2 827.2 337.7 845.9 339.1 852.1 C340.6 858.3 343.0 862.2 344.5 857.4 C345.9 852.6 346.6 829.5 347.7 823.3 C348.7 817.1 349.4 819.8 350.9 820.1 C352.3 820.5 355.5 824.7 356.2 825.4 C356.9 826.1 354.1 824.7 355.0 824.4 C355.9 824.0 359.8 821.7 361.4 823.3 C363.0 824.9 363.5 832.5 364.6 834.0 C365.7 835.4 366.9 831.5 367.8 831.8 C368.7 832.2 368.9 832.0 369.9 836.1 C371.0 840.2 372.8 854.2 374.2 856.4 C375.6 858.5 377.2 856.2 378.5 848.9 C379.7 841.6 380.4 817.4 381.7 812.6 C382.9 807.8 384.5 819.8 385.9 820.1 C387.3 820.5 388.8 809.1 390.2 814.8 C391.6 820.5 393.0 851.9 394.4 854.2 C395.9 856.5 397.3 832.5 398.7 828.6 C400.1 824.7 401.6 831.8 403.0 830.8 C404.4 829.7 405.8 818.2 407.2 822.2 C408.7 826.3 410.1 854.2 411.5 855.3 C412.9 856.4 414.3 832.4 415.8 828.6 C417.2 824.9 418.6 834.1 420.0 832.9 C421.5 831.7 422.9 817.1 424.3 821.2 C425.7 825.3 427.0 858.3 428.6 857.4 C430.2 856.5 432.3 822.4 433.9 815.8 C435.5 809.3 436.9 817.6 438.2 818.0 C439.4 818.3 440.1 808.7 441.4 818.0 C442.6 827.2 443.5 872.7 445.6 873.4 C447.8 874.1 452.0 829.2 454.1 822.2 C456.3 815.3 456.8 829.3 458.4 831.8 C460.0 834.3 462.1 840.2 463.7 837.2 C465.3 834.1 466.6 816.7 468.0 813.7 C469.4 810.7 470.8 818.9 472.3 819.0 C473.7 819.2 475.1 808.7 476.5 814.8 C478.0 820.8 479.4 856.2 480.8 855.3 C482.2 854.4 483.6 816.7 485.1 809.4 C486.5 802.2 487.9 811.6 489.3 811.6 C490.7 811.6 492.2 800.6 493.6 809.4 C495.0 818.3 495.7 866.3 497.9 864.9 C500.0 863.5 504.3 812.1 506.4 800.9 C508.5 789.7 509.2 797.5 510.7 797.7 C512.1 797.9 513.5 792.0 514.9 802.0 C516.3 811.9 517.8 854.6 519.2 857.4 C520.6 860.3 522.0 824.7 523.4 819.0 C524.9 813.4 526.3 822.9 527.7 823.3 C529.1 823.7 530.6 811.9 532.0 821.2 C533.4 830.4 534.8 876.8 536.2 878.7 C537.7 880.7 539.1 838.9 540.5 832.9 C541.9 826.9 543.3 844.1 544.8 842.5 C546.2 840.9 547.6 820.5 549.0 823.3 C550.5 826.1 551.9 860.6 553.3 859.6 C554.7 858.5 556.1 824.2 557.6 816.9 C559.0 809.6 560.4 818.3 561.8 815.8 C563.2 813.4 564.7 799.9 566.1 802.0 C567.5 804.1 568.9 829.2 570.4 828.6 C571.8 828.1 573.2 800.2 574.6 798.8 C576.0 797.4 577.5 817.3 578.9 820.1 C580.3 822.9 581.7 810.7 583.1 815.8 C584.6 821.0 586.0 853.2 587.4 851.0 C588.8 848.9 590.3 809.6 591.7 803.0 C593.1 796.5 594.3 809.1 595.9 811.6 C597.5 814.1 599.8 811.2 601.3 818.0 C602.7 824.7 603.2 854.6 604.5 852.1 C605.7 849.6 607.3 811.8 608.7 803.0 C610.2 794.3 612.3 800.4 613.0 799.9 L613.0 992 L100.0 992 Z" fill="url(#g16_726_0)"/><path d="M100.0 947.0 C101.3 945.0 105.8 934.2 107.8 935.2 C109.8 936.3 110.6 947.5 112.1 953.4 C113.5 959.2 114.9 972.9 116.3 970.4 C117.7 967.9 119.2 943.2 120.6 938.4 C122.0 933.6 123.4 942.0 124.9 941.6 C126.3 941.3 127.5 931.3 129.1 936.3 C130.7 941.3 132.8 971.0 134.4 971.5 C136.0 972.0 137.5 943.6 138.7 939.5 C140.0 935.4 140.7 945.7 141.9 947.0 C143.2 948.2 144.7 942.2 146.2 947.0 C147.7 951.8 149.3 977.5 150.9 975.8 C152.5 974.0 154.4 943.2 155.8 936.3 C157.1 929.4 157.7 934.2 159.0 934.2 C160.2 934.2 161.8 929.6 163.2 936.3 C164.7 943.1 166.1 973.1 167.5 974.7 C168.9 976.3 170.2 950.0 171.8 945.9 C173.4 941.8 175.5 951.6 177.1 950.2 C178.7 948.7 179.9 934.9 181.4 937.4 C182.8 939.9 184.4 960.7 185.6 965.1 C186.9 969.5 187.4 971.0 188.8 964.0 C190.2 957.1 192.5 929.4 194.1 923.5 C195.7 917.7 197.2 929.9 198.4 928.8 C199.7 927.8 200.2 910.5 201.6 917.1 C203.0 923.7 205.3 968.3 206.9 968.3 C208.5 968.3 210.0 924.2 211.2 917.1 C212.4 910.0 213.2 924.1 214.4 925.7 C215.6 927.2 217.1 918.5 218.7 926.7 C220.3 934.9 222.4 971.7 224.0 974.7 C225.6 977.7 226.8 950.2 228.3 944.8 C229.7 939.5 231.1 943.1 232.5 942.7 C233.9 942.4 235.4 937.9 236.8 942.7 C238.2 947.5 239.6 974.7 241.1 971.5 C242.5 968.3 243.9 931.7 245.3 923.5 C246.7 915.3 248.2 922.1 249.6 922.5 C251.0 922.8 252.4 917.5 253.8 925.7 C255.3 933.8 256.7 964.2 258.1 971.5 C259.5 978.8 260.8 975.6 262.4 969.4 C264.0 963.1 266.1 939.9 267.7 934.2 C269.3 928.5 270.7 934.2 272.0 935.2 C273.2 936.3 273.9 934.4 275.2 940.6 C276.4 946.8 278.0 975.4 279.4 972.6 C280.9 969.7 282.3 931.9 283.7 923.5 C285.1 915.2 286.7 923.3 288.0 922.5 C289.2 921.6 289.7 909.5 291.2 918.2 C292.6 926.9 294.9 971.0 296.5 974.7 C298.1 978.4 299.3 945.7 300.8 940.6 C302.2 935.4 303.8 945.0 305.0 943.8 C306.3 942.5 306.8 929.4 308.2 933.1 C309.6 936.8 312.0 963.9 313.6 966.2 C315.1 968.5 316.6 949.1 317.8 947.0 C319.1 944.8 319.8 952.7 321.0 953.4 C322.3 954.1 323.7 947.9 325.3 951.2 C326.9 954.6 329.0 970.2 330.6 973.6 C332.2 977.0 333.5 977.5 334.9 971.5 C336.3 965.5 337.7 943.1 339.1 937.4 C340.6 931.7 342.0 936.8 343.4 937.4 C344.8 937.9 346.2 934.2 347.7 940.6 C349.1 947.0 350.7 978.2 351.9 975.8 C353.2 973.3 353.6 935.2 355.0 925.7 C356.4 916.1 358.7 918.2 360.3 918.2 C361.9 918.2 363.2 916.9 364.6 925.7 C366.0 934.4 367.3 961.9 368.9 970.4 C370.5 979.0 372.6 981.6 374.2 976.8 C375.8 972.0 376.5 947.5 378.5 941.6 C380.4 935.8 384.0 937.0 385.9 941.6 C387.9 946.3 388.6 969.2 390.2 969.4 C391.8 969.5 393.9 946.6 395.5 942.7 C397.1 938.8 398.4 945.6 399.8 945.9 C401.2 946.3 402.6 939.7 404.0 944.8 C405.5 950.0 406.9 977.4 408.3 976.8 C409.7 976.3 411.1 947.0 412.6 941.6 C414.0 936.3 415.6 945.2 416.8 944.8 C418.1 944.5 418.6 934.5 420.0 939.5 C421.5 944.5 423.9 973.6 425.4 974.7 C426.8 975.8 427.3 950.5 428.6 945.9 C429.8 941.3 431.4 947.1 432.8 947.0 C434.2 946.8 435.5 940.8 437.1 944.8 C438.7 948.9 441.0 971.8 442.4 971.5 C443.8 971.1 444.2 947.5 445.6 942.7 C447.0 937.9 449.5 943.2 450.9 942.7 C452.4 942.2 452.7 934.7 454.1 939.5 C455.6 944.3 457.9 966.7 459.5 971.5 C461.1 976.3 462.3 975.6 463.7 968.3 C465.2 961.0 466.6 934.7 468.0 927.8 C469.4 920.9 470.8 925.5 472.3 926.7 C473.7 928.0 475.1 927.4 476.5 935.2 C478.0 943.1 479.4 971.0 480.8 973.6 C482.2 976.3 483.6 955.5 485.1 951.2 C486.5 947.0 487.9 949.3 489.3 948.0 C490.7 946.8 492.2 940.4 493.6 943.8 C495.0 947.1 496.4 964.4 497.9 968.3 C499.3 972.2 500.7 970.8 502.1 967.2 C503.5 963.7 504.4 950.7 506.4 947.0 C508.3 943.2 511.7 941.1 513.8 944.8 C516.0 948.6 517.6 969.2 519.2 969.4 C520.8 969.5 522.0 948.9 523.4 945.9 C524.9 942.9 526.3 950.2 527.7 951.2 C529.1 952.3 530.6 948.2 532.0 952.3 C533.4 956.4 534.6 976.5 536.2 975.8 C537.8 975.0 540.0 953.2 541.6 948.0 C543.2 942.9 544.6 945.0 545.8 944.8 C547.1 944.7 547.8 941.8 549.0 947.0 C550.3 952.1 551.9 975.2 553.3 975.8 C554.7 976.3 556.1 954.4 557.6 950.2 C559.0 945.9 560.4 950.9 561.8 950.2 C563.2 949.5 564.7 942.5 566.1 945.9 C567.5 949.3 568.9 966.5 570.4 970.4 C571.8 974.3 573.2 974.2 574.6 969.4 C576.0 964.6 577.3 946.4 578.9 941.6 C580.5 936.8 582.6 940.0 584.2 940.6 C585.8 941.1 587.2 940.0 588.5 944.8 C589.7 949.6 590.4 973.3 591.7 969.4 C592.9 965.5 594.5 930.1 595.9 921.4 C597.4 912.7 598.8 917.8 600.2 917.1 C601.6 916.4 603.0 907.9 604.5 917.1 C605.9 926.4 607.3 967.6 608.7 972.6 C610.2 977.5 612.3 951.2 613.0 947.0 L613.0 992 L100.0 992 Z" fill="url(#g16_726_1)"/><path d="M100.0 808.4 C100.8 808.2 103.1 805.2 104.6 807.3 C106.1 809.4 107.6 814.2 108.9 821.2 C110.1 828.1 110.8 848.2 112.1 848.9 C113.3 849.6 114.9 832.4 116.3 825.4 C117.7 818.5 119.2 809.1 120.6 807.3 C122.0 805.5 123.4 808.0 124.9 814.8 C126.3 821.5 127.7 846.6 129.1 847.8 C130.5 849.1 132.0 826.9 133.4 822.2 C134.8 817.6 136.2 820.1 137.6 820.1 C139.1 820.1 140.3 815.7 141.9 822.2 C143.5 828.8 145.6 861.5 147.2 859.6 C148.8 857.6 150.1 819.6 151.5 810.5 C152.9 801.4 154.5 805.9 155.8 805.2 C157.0 804.5 157.7 797.5 159.0 806.2 C160.2 815.0 161.8 855.6 163.2 857.4 C164.7 859.2 166.1 824.5 167.5 816.9 C168.9 809.3 170.2 814.1 171.8 811.6 C173.4 809.1 175.0 794.5 177.1 802.0 C179.2 809.4 182.6 853.2 184.6 856.4 C186.5 859.6 187.2 827.0 188.8 821.2 C190.4 815.3 192.4 822.2 194.1 821.2 C195.9 820.1 197.3 818.0 199.5 814.8 C201.6 811.6 205.0 803.8 206.9 802.0 C208.9 800.2 209.3 792.6 211.2 804.1 C213.2 815.7 216.7 868.3 218.7 871.3 C220.6 874.3 221.5 829.9 222.9 822.2 C224.4 814.6 225.8 826.7 227.2 825.4 C228.6 824.2 229.9 807.5 231.5 814.8 C233.1 822.1 235.2 868.4 236.8 869.1 C238.4 869.9 239.8 826.0 241.1 819.0 C242.3 812.1 243.0 828.3 244.3 827.6 C245.5 826.9 246.9 808.2 248.5 814.8 C250.1 821.4 252.2 865.4 253.8 867.0 C255.4 868.6 256.9 830.8 258.1 824.4 C259.4 818.0 259.9 830.1 261.3 828.6 C262.7 827.2 265.0 812.1 266.6 815.8 C268.2 819.6 269.5 852.1 270.9 851.0 C272.3 850.0 273.9 815.3 275.2 809.4 C276.4 803.6 276.9 815.3 278.4 815.8 C279.8 816.4 282.1 807.1 283.7 812.6 C285.3 818.2 286.0 851.2 288.0 848.9 C289.9 846.6 293.3 804.5 295.4 798.8 C297.6 793.1 298.4 805.4 300.8 814.8 C303.1 824.2 307.2 858.5 309.3 855.3 C311.4 852.1 312.1 803.0 313.6 795.6 C315.0 788.1 316.4 809.3 317.8 810.5 C319.2 811.8 320.7 803.4 322.1 803.0 C323.5 802.7 324.7 807.3 326.3 808.4 C327.9 809.4 330.1 807.5 331.7 809.4 C333.3 811.4 334.7 813.0 335.9 820.1 C337.2 827.2 337.7 845.9 339.1 852.1 C340.6 858.3 343.0 862.2 344.5 857.4 C345.9 852.6 346.6 829.5 347.7 823.3 C348.7 817.1 349.4 819.8 350.9 820.1 C352.3 820.5 355.5 824.7 356.2 825.4 C356.9 826.1 354.1 824.7 355.0 824.4 C355.9 824.0 359.8 821.7 361.4 823.3 C363.0 824.9 363.5 832.5 364.6 834.0 C365.7 835.4 366.9 831.5 367.8 831.8 C368.7 832.2 368.9 832.0 369.9 836.1 C371.0 840.2 372.8 854.2 374.2 856.4 C375.6 858.5 377.2 856.2 378.5 848.9 C379.7 841.6 380.4 817.4 381.7 812.6 C382.9 807.8 384.5 819.8 385.9 820.1 C387.3 820.5 388.8 809.1 390.2 814.8 C391.6 820.5 393.0 851.9 394.4 854.2 C395.9 856.5 397.3 832.5 398.7 828.6 C400.1 824.7 401.6 831.8 403.0 830.8 C404.4 829.7 405.8 818.2 407.2 822.2 C408.7 826.3 410.1 854.2 411.5 855.3 C412.9 856.4 414.3 832.4 415.8 828.6 C417.2 824.9 418.6 834.1 420.0 832.9 C421.5 831.7 422.9 817.1 424.3 821.2 C425.7 825.3 427.0 858.3 428.6 857.4 C430.2 856.5 432.3 822.4 433.9 815.8 C435.5 809.3 436.9 817.6 438.2 818.0 C439.4 818.3 440.1 808.7 441.4 818.0 C442.6 827.2 443.5 872.7 445.6 873.4 C447.8 874.1 452.0 829.2 454.1 822.2 C456.3 815.3 456.8 829.3 458.4 831.8 C460.0 834.3 462.1 840.2 463.7 837.2 C465.3 834.1 466.6 816.7 468.0 813.7 C469.4 810.7 470.8 818.9 472.3 819.0 C473.7 819.2 475.1 808.7 476.5 814.8 C478.0 820.8 479.4 856.2 480.8 855.3 C482.2 854.4 483.6 816.7 485.1 809.4 C486.5 802.2 487.9 811.6 489.3 811.6 C490.7 811.6 492.2 800.6 493.6 809.4 C495.0 818.3 495.7 866.3 497.9 864.9 C500.0 863.5 504.3 812.1 506.4 800.9 C508.5 789.7 509.2 797.5 510.7 797.7 C512.1 797.9 513.5 792.0 514.9 802.0 C516.3 811.9 517.8 854.6 519.2 857.4 C520.6 860.3 522.0 824.7 523.4 819.0 C524.9 813.4 526.3 822.9 527.7 823.3 C529.1 823.7 530.6 811.9 532.0 821.2 C533.4 830.4 534.8 876.8 536.2 878.7 C537.7 880.7 539.1 838.9 540.5 832.9 C541.9 826.9 543.3 844.1 544.8 842.5 C546.2 840.9 547.6 820.5 549.0 823.3 C550.5 826.1 551.9 860.6 553.3 859.6 C554.7 858.5 556.1 824.2 557.6 816.9 C559.0 809.6 560.4 818.3 561.8 815.8 C563.2 813.4 564.7 799.9 566.1 802.0 C567.5 804.1 568.9 829.2 570.4 828.6 C571.8 828.1 573.2 800.2 574.6 798.8 C576.0 797.4 577.5 817.3 578.9 820.1 C580.3 822.9 581.7 810.7 583.1 815.8 C584.6 821.0 586.0 853.2 587.4 851.0 C588.8 848.9 590.3 809.6 591.7 803.0 C593.1 796.5 594.3 809.1 595.9 811.6 C597.5 814.1 599.8 811.2 601.3 818.0 C602.7 824.7 603.2 854.6 604.5 852.1 C605.7 849.6 607.3 811.8 608.7 803.0 C610.2 794.3 612.3 800.4 613.0 799.9" fill="none" stroke="#73bf69" stroke-width="1.7" stroke-linejoin="round"/><path d="M100.0 947.0 C101.3 945.0 105.8 934.2 107.8 935.2 C109.8 936.3 110.6 947.5 112.1 953.4 C113.5 959.2 114.9 972.9 116.3 970.4 C117.7 967.9 119.2 943.2 120.6 938.4 C122.0 933.6 123.4 942.0 124.9 941.6 C126.3 941.3 127.5 931.3 129.1 936.3 C130.7 941.3 132.8 971.0 134.4 971.5 C136.0 972.0 137.5 943.6 138.7 939.5 C140.0 935.4 140.7 945.7 141.9 947.0 C143.2 948.2 144.7 942.2 146.2 947.0 C147.7 951.8 149.3 977.5 150.9 975.8 C152.5 974.0 154.4 943.2 155.8 936.3 C157.1 929.4 157.7 934.2 159.0 934.2 C160.2 934.2 161.8 929.6 163.2 936.3 C164.7 943.1 166.1 973.1 167.5 974.7 C168.9 976.3 170.2 950.0 171.8 945.9 C173.4 941.8 175.5 951.6 177.1 950.2 C178.7 948.7 179.9 934.9 181.4 937.4 C182.8 939.9 184.4 960.7 185.6 965.1 C186.9 969.5 187.4 971.0 188.8 964.0 C190.2 957.1 192.5 929.4 194.1 923.5 C195.7 917.7 197.2 929.9 198.4 928.8 C199.7 927.8 200.2 910.5 201.6 917.1 C203.0 923.7 205.3 968.3 206.9 968.3 C208.5 968.3 210.0 924.2 211.2 917.1 C212.4 910.0 213.2 924.1 214.4 925.7 C215.6 927.2 217.1 918.5 218.7 926.7 C220.3 934.9 222.4 971.7 224.0 974.7 C225.6 977.7 226.8 950.2 228.3 944.8 C229.7 939.5 231.1 943.1 232.5 942.7 C233.9 942.4 235.4 937.9 236.8 942.7 C238.2 947.5 239.6 974.7 241.1 971.5 C242.5 968.3 243.9 931.7 245.3 923.5 C246.7 915.3 248.2 922.1 249.6 922.5 C251.0 922.8 252.4 917.5 253.8 925.7 C255.3 933.8 256.7 964.2 258.1 971.5 C259.5 978.8 260.8 975.6 262.4 969.4 C264.0 963.1 266.1 939.9 267.7 934.2 C269.3 928.5 270.7 934.2 272.0 935.2 C273.2 936.3 273.9 934.4 275.2 940.6 C276.4 946.8 278.0 975.4 279.4 972.6 C280.9 969.7 282.3 931.9 283.7 923.5 C285.1 915.2 286.7 923.3 288.0 922.5 C289.2 921.6 289.7 909.5 291.2 918.2 C292.6 926.9 294.9 971.0 296.5 974.7 C298.1 978.4 299.3 945.7 300.8 940.6 C302.2 935.4 303.8 945.0 305.0 943.8 C306.3 942.5 306.8 929.4 308.2 933.1 C309.6 936.8 312.0 963.9 313.6 966.2 C315.1 968.5 316.6 949.1 317.8 947.0 C319.1 944.8 319.8 952.7 321.0 953.4 C322.3 954.1 323.7 947.9 325.3 951.2 C326.9 954.6 329.0 970.2 330.6 973.6 C332.2 977.0 333.5 977.5 334.9 971.5 C336.3 965.5 337.7 943.1 339.1 937.4 C340.6 931.7 342.0 936.8 343.4 937.4 C344.8 937.9 346.2 934.2 347.7 940.6 C349.1 947.0 350.7 978.2 351.9 975.8 C353.2 973.3 353.6 935.2 355.0 925.7 C356.4 916.1 358.7 918.2 360.3 918.2 C361.9 918.2 363.2 916.9 364.6 925.7 C366.0 934.4 367.3 961.9 368.9 970.4 C370.5 979.0 372.6 981.6 374.2 976.8 C375.8 972.0 376.5 947.5 378.5 941.6 C380.4 935.8 384.0 937.0 385.9 941.6 C387.9 946.3 388.6 969.2 390.2 969.4 C391.8 969.5 393.9 946.6 395.5 942.7 C397.1 938.8 398.4 945.6 399.8 945.9 C401.2 946.3 402.6 939.7 404.0 944.8 C405.5 950.0 406.9 977.4 408.3 976.8 C409.7 976.3 411.1 947.0 412.6 941.6 C414.0 936.3 415.6 945.2 416.8 944.8 C418.1 944.5 418.6 934.5 420.0 939.5 C421.5 944.5 423.9 973.6 425.4 974.7 C426.8 975.8 427.3 950.5 428.6 945.9 C429.8 941.3 431.4 947.1 432.8 947.0 C434.2 946.8 435.5 940.8 437.1 944.8 C438.7 948.9 441.0 971.8 442.4 971.5 C443.8 971.1 444.2 947.5 445.6 942.7 C447.0 937.9 449.5 943.2 450.9 942.7 C452.4 942.2 452.7 934.7 454.1 939.5 C455.6 944.3 457.9 966.7 459.5 971.5 C461.1 976.3 462.3 975.6 463.7 968.3 C465.2 961.0 466.6 934.7 468.0 927.8 C469.4 920.9 470.8 925.5 472.3 926.7 C473.7 928.0 475.1 927.4 476.5 935.2 C478.0 943.1 479.4 971.0 480.8 973.6 C482.2 976.3 483.6 955.5 485.1 951.2 C486.5 947.0 487.9 949.3 489.3 948.0 C490.7 946.8 492.2 940.4 493.6 943.8 C495.0 947.1 496.4 964.4 497.9 968.3 C499.3 972.2 500.7 970.8 502.1 967.2 C503.5 963.7 504.4 950.7 506.4 947.0 C508.3 943.2 511.7 941.1 513.8 944.8 C516.0 948.6 517.6 969.2 519.2 969.4 C520.8 969.5 522.0 948.9 523.4 945.9 C524.9 942.9 526.3 950.2 527.7 951.2 C529.1 952.3 530.6 948.2 532.0 952.3 C533.4 956.4 534.6 976.5 536.2 975.8 C537.8 975.0 540.0 953.2 541.6 948.0 C543.2 942.9 544.6 945.0 545.8 944.8 C547.1 944.7 547.8 941.8 549.0 947.0 C550.3 952.1 551.9 975.2 553.3 975.8 C554.7 976.3 556.1 954.4 557.6 950.2 C559.0 945.9 560.4 950.9 561.8 950.2 C563.2 949.5 564.7 942.5 566.1 945.9 C567.5 949.3 568.9 966.5 570.4 970.4 C571.8 974.3 573.2 974.2 574.6 969.4 C576.0 964.6 577.3 946.4 578.9 941.6 C580.5 936.8 582.6 940.0 584.2 940.6 C585.8 941.1 587.2 940.0 588.5 944.8 C589.7 949.6 590.4 973.3 591.7 969.4 C592.9 965.5 594.5 930.1 595.9 921.4 C597.4 912.7 598.8 917.8 600.2 917.1 C601.6 916.4 603.0 907.9 604.5 917.1 C605.9 926.4 607.3 967.6 608.7 972.6 C610.2 977.5 612.3 951.2 613.0 947.0" fill="none" stroke="#f2cc0c" stroke-width="1.7" stroke-linejoin="round"/></g><line x1="240.5" y1="775" x2="240.5" y2="991.8" stroke="#c4c6d0" stroke-width="1" stroke-dasharray="2 4" opacity="0.7"/><line x1="102" y1="836.4" x2="613" y2="836.4" stroke="#c4c6d0" stroke-width="1" stroke-dasharray="2 4" opacity="0.6"/><text x="163.14966666666666" y="1011" font-size="12.3" fill="#c6c7d1" stroke="#c6c7d1" stroke-width="0.2" text-anchor="middle">16:50</text><text x="248.31633333333332" y="1011" font-size="12.3" fill="#c6c7d1" stroke="#c6c7d1" stroke-width="0.2" text-anchor="middle">17:00</text><text x="333.483" y="1011" font-size="12.3" fill="#c6c7d1" stroke="#c6c7d1" stroke-width="0.2" text-anchor="middle">17:10</text><text x="418.64966666666663" y="1011" font-size="12.3" fill="#c6c7d1" stroke="#c6c7d1" stroke-width="0.2" text-anchor="middle">17:20</text><text x="503.8163333333333" y="1011" font-size="12.3" fill="#c6c7d1" stroke="#c6c7d1" stroke-width="0.2" text-anchor="middle">17:30</text><text x="588.983" y="1011" font-size="12.3" fill="#c6c7d1" stroke="#c6c7d1" stroke-width="0.2" text-anchor="middle">17:40</text><text x="99.2" y="996.0999999999999" font-size="12.3" letter-spacing="0.7" fill="#c6c7d1" stroke="#c6c7d1" stroke-width="0.2" text-anchor="end">0.0000</text><text x="99.2" y="946.0249999999999" font-size="12.3" letter-spacing="0.7" fill="#c6c7d1" stroke="#c6c7d1" stroke-width="0.2" text-anchor="end">0.0002</text><text x="99.2" y="895.9499999999999" font-size="12.3" letter-spacing="0.7" fill="#c6c7d1" stroke="#c6c7d1" stroke-width="0.2" text-anchor="end">0.0004</text><text x="99.2" y="845.8749999999999" font-size="12.3" letter-spacing="0.7" fill="#c6c7d1" stroke="#c6c7d1" stroke-width="0.2" text-anchor="end">0.0006</text><text x="99.2" y="795.8" font-size="12.3" letter-spacing="0.7" fill="#c6c7d1" stroke="#c6c7d1" stroke-width="0.2" text-anchor="end">0.0008</text><text x="34.8" y="883.7" font-size="12.3" fill="#c6c7d1" text-anchor="middle" transform="rotate(-90 34.8 883.7)">CPU Cores</text></g></svg><div class="t" style="left:638.3px;top:43.0px;font-size:12.8px;line-height:17px;color:#6e9fff;-webkit-text-stroke:0.2px #6e9fff">Name</div><div class="t" style="right:150px;top:43.0px;font-size:12.8px;line-height:17px;color:#6e9fff;text-align:right;-webkit-text-stroke:0.2px #6e9fff">Min</div><div class="t" style="right:87.39999999999998px;top:43.0px;font-size:12.8px;line-height:17px;color:#6e9fff;text-align:right;-webkit-text-stroke:0.2px #6e9fff">Max</div><div class="t" style="right:16.600000000000023px;top:43.0px;font-size:12.8px;line-height:17px;color:#6e9fff;text-align:right;-webkit-text-stroke:0.2px #6e9fff">Mean</div><div class="abs" style="left:608.4px;top:63.5px;width:321.30000000000007px;height:1px;background:rgba(204,204,220,0.12)"></div><div class="abs" style="left:608.4px;top:87.5px;width:321.30000000000007px;height:1px;background:rgba(204,204,220,0.12)"></div><div class="abs" style="left:608.4px;top:111.5px;width:321.30000000000007px;height:1px;background:rgba(204,204,220,0.12)"></div><div class="abs" style="left:616px;top:73.5px;width:14px;height:4px;border-radius:2px;background:#73bf69"></div><div class="t" style="left:638.3px;top:67.0px;font-size:12.8px;line-height:17px;color:#ccccdc">alertmanager</div><div class="t" style="right:150px;top:67.0px;font-size:12.8px;line-height:17px;color:#ccccdc;text-align:right">0.0005</div><div class="t" style="right:87.39999999999998px;top:67.0px;font-size:12.8px;line-height:17px;color:#ccccdc;text-align:right">0.0008</div><div class="t" style="right:16.600000000000023px;top:67.0px;font-size:12.8px;line-height:17px;color:#ccccdc;text-align:right">0.0007</div><div class="abs" style="left:616px;top:97.5px;width:14px;height:4px;border-radius:2px;background:#f2cc0c"></div><div class="t" style="left:638.3px;top:91.0px;font-size:12.8px;line-height:17px;color:#ccccdc">config-reloader</div><div class="t" style="right:150px;top:91.0px;font-size:12.8px;line-height:17px;color:#ccccdc;text-align:right">0.0001</div><div class="t" style="right:87.39999999999998px;top:91.0px;font-size:12.8px;line-height:17px;color:#ccccdc;text-align:right">0.0003</div><div class="t" style="right:16.600000000000023px;top:91.0px;font-size:12.8px;line-height:17px;color:#ccccdc;text-align:right">0.0002</div></div>
<div class="panel" style="left:964px;top:726px;width:940px;height:296px"><div class="ptitle">Memory Usage by container</div><svg class="abs" style="left:-1px;top:-1px" width="940" height="296" font-family="Liberation Sans, sans-serif"><g transform="translate(-964,-726)"><defs><linearGradient id="g964_726_0" x1="0" y1="795" x2="0" y2="989" gradientUnits="userSpaceOnUse"><stop offset="0" stop-color="#73bf69" stop-opacity="0.14"/><stop offset="1" stop-color="#73bf69" stop-opacity="0.02"/></linearGradient><linearGradient id="g964_726_1" x1="0" y1="968" x2="0" y2="989" gradientUnits="userSpaceOnUse"><stop offset="0" stop-color="#f2cc0c" stop-opacity="0.06"/><stop offset="1" stop-color="#f2cc0c" stop-opacity="0.0"/></linearGradient><clipPath id="c964_726"><rect x="1068" y="771" width="465" height="218"/></clipPath></defs><rect x="1123.145" y="775" width="1" height="218" fill="rgba(204,204,220,0.12)"/><rect x="1200.645" y="775" width="1" height="218" fill="rgba(204,204,220,0.12)"/><rect x="1278.145" y="775" width="1" height="218" fill="rgba(204,204,220,0.12)"/><rect x="1355.645" y="775" width="1" height="218" fill="rgba(204,204,220,0.12)"/><rect x="1433.145" y="775" width="1" height="218" fill="rgba(204,204,220,0.12)"/><rect x="1510.645" y="775" width="1" height="218" fill="rgba(204,204,220,0.12)"/><rect x="1069" y="981.8" width="468" height="1" fill="rgba(204,204,220,0.12)"/><rect x="1069" y="949.38" width="468" height="1" fill="rgba(204,204,220,0.12)"/><rect x="1069" y="916.9599999999999" width="468" height="1" fill="rgba(204,204,220,0.12)"/><rect x="1069" y="884.54" width="468" height="1" fill="rgba(204,204,220,0.12)"/><rect x="1069" y="852.1199999999999" width="468" height="1" fill="rgba(204,204,220,0.12)"/><rect x="1069" y="819.6999999999999" width="468" height="1" fill="rgba(204,204,220,0.12)"/><rect x="1069" y="787.28" width="468" height="1" fill="rgba(204,204,220,0.12)"/><g clip-path="url(#c964_726)"><path d="M1066.0 800.9 L1078.8 800.9 L1081.3 833.8 L1083.1 824.4 L1085.0 823.8 L1086.9 812.5 L1090.6 812.5 L1092.5 801.9 L1103.8 801.9 L1105.0 800.6 L1110.0 800.6 L1111.9 816.9 L1131.9 816.9 L1133.8 811.9 L1140.0 811.3 L1158.8 811.3 L1161.3 846.3 L1166.9 846.3 L1168.8 835.7 L1173.8 835.7 L1175.7 821.9 L1180.1 821.9 L1181.9 816.9 L1184.4 816.9 L1186.3 811.9 L1190.7 811.9 L1193.2 798.1 L1197.6 797.5 L1199.4 795.0 L1206.9 795.0 L1209.4 818.1 L1220.7 818.1 L1223.2 828.8 L1227.0 828.8 L1229.5 818.1 L1232.0 808.8 L1235.7 808.8 L1240.1 816.9 L1250.1 816.9 L1252.0 801.3 L1257.6 800.6 L1258.8 800.0 L1271.4 800.0 L1273.2 810.0 L1280.1 810.0 L1281.4 808.8 L1286.4 808.8 L1288.9 818.1 L1295.1 818.1 L1295.0 817.8 L1301.4 817.8 L1303.3 822.9 L1325.6 822.9 L1326.9 821.6 L1330.7 821.6 L1332.7 812.7 L1341.0 812.7 L1342.9 803.1 L1351.2 803.1 L1352.4 801.8 L1365.9 801.8 L1368.4 833.7 L1370.3 824.2 L1372.9 823.5 L1375.4 813.9 L1378.0 813.3 L1381.8 802.4 L1385.0 805.6 L1392.0 805.6 L1393.3 804.4 L1396.5 804.4 L1399.0 852.9 L1404.8 852.9 L1406.7 835.6 L1408.6 835.6 L1411.2 826.1 L1413.7 826.7 L1429.7 826.7 L1432.2 833.1 L1434.2 833.1 L1435.4 826.1 L1446.9 826.1 L1448.8 828.6 L1461.6 828.6 L1462.9 827.3 L1476.9 827.3 L1478.8 839.5 L1480.8 838.2 L1505.6 838.2 L1507.6 826.7 L1522.9 826.7 L1524.8 812.7 L1533.1 812.7 L1533.1 989 L1066.0 989 Z" fill="url(#g964_726_0)"/><path d="M1066.0 969.8 L1165.0 969.8 L1167.0 968.8 L1379.0 968.8 L1381.0 966.5 L1383.0 968.8 L1533.0 968.8 L1533.0 989 L1066.0 989 Z" fill="url(#g964_726_1)"/><path d="M1066.0 800.9 L1078.8 800.9 L1081.3 833.8 L1083.1 824.4 L1085.0 823.8 L1086.9 812.5 L1090.6 812.5 L1092.5 801.9 L1103.8 801.9 L1105.0 800.6 L1110.0 800.6 L1111.9 816.9 L1131.9 816.9 L1133.8 811.9 L1140.0 811.3 L1158.8 811.3 L1161.3 846.3 L1166.9 846.3 L1168.8 835.7 L1173.8 835.7 L1175.7 821.9 L1180.1 821.9 L1181.9 816.9 L1184.4 816.9 L1186.3 811.9 L1190.7 811.9 L1193.2 798.1 L1197.6 797.5 L1199.4 795.0 L1206.9 795.0 L1209.4 818.1 L1220.7 818.1 L1223.2 828.8 L1227.0 828.8 L1229.5 818.1 L1232.0 808.8 L1235.7 808.8 L1240.1 816.9 L1250.1 816.9 L1252.0 801.3 L1257.6 800.6 L1258.8 800.0 L1271.4 800.0 L1273.2 810.0 L1280.1 810.0 L1281.4 808.8 L1286.4 808.8 L1288.9 818.1 L1295.1 818.1 L1295.0 817.8 L1301.4 817.8 L1303.3 822.9 L1325.6 822.9 L1326.9 821.6 L1330.7 821.6 L1332.7 812.7 L1341.0 812.7 L1342.9 803.1 L1351.2 803.1 L1352.4 801.8 L1365.9 801.8 L1368.4 833.7 L1370.3 824.2 L1372.9 823.5 L1375.4 813.9 L1378.0 813.3 L1381.8 802.4 L1385.0 805.6 L1392.0 805.6 L1393.3 804.4 L1396.5 804.4 L1399.0 852.9 L1404.8 852.9 L1406.7 835.6 L1408.6 835.6 L1411.2 826.1 L1413.7 826.7 L1429.7 826.7 L1432.2 833.1 L1434.2 833.1 L1435.4 826.1 L1446.9 826.1 L1448.8 828.6 L1461.6 828.6 L1462.9 827.3 L1476.9 827.3 L1478.8 839.5 L1480.8 838.2 L1505.6 838.2 L1507.6 826.7 L1522.9 826.7 L1524.8 812.7 L1533.1 812.7" fill="none" stroke="#73bf69" stroke-width="1.7" stroke-linejoin="round"/><path d="M1066.0 969.8 L1165.0 969.8 L1167.0 968.8 L1379.0 968.8 L1381.0 966.5 L1383.0 968.8 L1533.0 968.8" fill="none" stroke="#f2cc0c" stroke-width="1.7" stroke-linejoin="round"/></g><line x1="1193.5" y1="775" x2="1193.5" y2="989" stroke="#c4c6d0" stroke-width="1" stroke-dasharray="2 4" opacity="0.7"/><line x1="1068" y1="836.4" x2="1533" y2="836.4" stroke="#c4c6d0" stroke-width="1" stroke-dasharray="2 4" opacity="0.6"/><text x="1123.645" y="1011" font-size="12.3" fill="#c6c7d1" stroke="#c6c7d1" stroke-width="0.2" text-anchor="middle">16:50</text><text x="1201.145" y="1011" font-size="12.3" fill="#c6c7d1" stroke="#c6c7d1" stroke-width="0.2" text-anchor="middle">17:00</text><text x="1278.645" y="1011" font-size="12.3" fill="#c6c7d1" stroke="#c6c7d1" stroke-width="0.2" text-anchor="middle">17:10</text><text x="1356.145" y="1011" font-size="12.3" fill="#c6c7d1" stroke="#c6c7d1" stroke-width="0.2" text-anchor="middle">17:20</text><text x="1433.645" y="1011" font-size="12.3" fill="#c6c7d1" stroke="#c6c7d1" stroke-width="0.2" text-anchor="middle">17:30</text><text x="1511.145" y="1011" font-size="12.3" fill="#c6c7d1" stroke="#c6c7d1" stroke-width="0.2" text-anchor="middle">17:40</text><text x="1065.55" y="986.5999999999999" font-size="12.3" letter-spacing="0.35" fill="#c6c7d1" stroke="#c6c7d1" stroke-width="0.2" text-anchor="end">24.00 MiB</text><text x="1065.55" y="954.18" font-size="12.3" letter-spacing="0.35" fill="#c6c7d1" stroke="#c6c7d1" stroke-width="0.2" text-anchor="end">28.00 MiB</text><text x="1065.55" y="921.7599999999999" font-size="12.3" letter-spacing="0.35" fill="#c6c7d1" stroke="#c6c7d1" stroke-width="0.2" text-anchor="end">32.00 MiB</text><text x="1065.55" y="889.3399999999999" font-size="12.3" letter-spacing="0.35" fill="#c6c7d1" stroke="#c6c7d1" stroke-width="0.2" text-anchor="end">36.00 MiB</text><text x="1065.55" y="856.9199999999998" font-size="12.3" letter-spacing="0.35" fill="#c6c7d1" stroke="#c6c7d1" stroke-width="0.2" text-anchor="end">40.00 MiB</text><text x="1065.55" y="824.4999999999999" font-size="12.3" letter-spacing="0.35" fill="#c6c7d1" stroke="#c6c7d1" stroke-width="0.2" text-anchor="end">44.00 MiB</text><text x="1065.55" y="792.0799999999999" font-size="12.3" letter-spacing="0.35" fill="#c6c7d1" stroke="#c6c7d1" stroke-width="0.2" text-anchor="end">48.00 MiB</text><text x="982.8" y="883.7" font-size="12.3" fill="#c6c7d1" text-anchor="middle" transform="rotate(-90 982.8 883.7)">Bytes</text></g></svg><div class="t" style="left:607.4000000000001px;top:43.0px;font-size:12.8px;line-height:17px;color:#6e9fff;-webkit-text-stroke:0.2px #6e9fff">Name</div><div class="t" style="right:181px;top:43.0px;font-size:12.8px;line-height:17px;color:#6e9fff;text-align:right;-webkit-text-stroke:0.2px #6e9fff">Min</div><div class="t" style="right:103.70000000000005px;top:43.0px;font-size:12.8px;line-height:17px;color:#6e9fff;text-align:right;-webkit-text-stroke:0.2px #6e9fff">Max</div><div class="t" style="right:21.200000000000045px;top:43.0px;font-size:12.8px;line-height:17px;color:#6e9fff;text-align:right;-webkit-text-stroke:0.2px #6e9fff">Mean</div><div class="abs" style="left:577px;top:63.5px;width:352.79999999999995px;height:1px;background:rgba(204,204,220,0.12)"></div><div class="abs" style="left:577px;top:87.5px;width:352.79999999999995px;height:1px;background:rgba(204,204,220,0.12)"></div><div class="abs" style="left:577px;top:111.5px;width:352.79999999999995px;height:1px;background:rgba(204,204,220,0.12)"></div><div class="abs" style="left:585px;top:73.5px;width:14px;height:4px;border-radius:2px;background:#73bf69"></div><div class="t" style="left:607.4000000000001px;top:67.0px;font-size:12.8px;line-height:17px;color:#ccccdc">alertmanager</div><div class="t" style="right:167px;top:67.0px;font-size:12.8px;line-height:17px;color:#ccccdc;text-align:right">39.97 MiB</div><div class="t" style="right:92px;top:67.0px;font-size:12.8px;line-height:17px;color:#ccccdc;text-align:right">47.17 MiB</div><div class="t" style="right:16.59999999999991px;top:67.0px;font-size:12.8px;line-height:17px;color:#ccccdc;text-align:right">44.32 MiB</div><div class="abs" style="left:585px;top:97.5px;width:14px;height:4px;border-radius:2px;background:#f2cc0c"></div><div class="t" style="left:607.4000000000001px;top:91.0px;font-size:12.8px;line-height:17px;color:#ccccdc">config-reloader</div><div class="t" style="right:167px;top:91.0px;font-size:12.8px;line-height:17px;color:#ccccdc;text-align:right">25.57 MiB</div><div class="t" style="right:92px;top:91.0px;font-size:12.8px;line-height:17px;color:#ccccdc;text-align:right">25.95 MiB</div><div class="t" style="right:16.59999999999991px;top:91.0px;font-size:12.8px;line-height:17px;color:#ccccdc;text-align:right">25.69 MiB</div></div>
<div class="panel" style="left:16px;top:1030px;width:940px;height:296px"><div class="ptitle">CPU Throttled seconds by container</div><div class="t" style="left:630px;top:42px;font-size:12.8px;line-height:17px;color:#6e9fff">Name</div><div class="t" style="right:158px;top:42px;font-size:12.8px;line-height:17px;color:#6e9fff">Min</div><div class="t" style="right:96px;top:42px;font-size:12.8px;line-height:17px;color:#6e9fff">Max</div><div class="t" style="right:15px;top:42px;font-size:12.8px;line-height:17px;color:#6e9fff">Mean</div></div>
</body></html>
